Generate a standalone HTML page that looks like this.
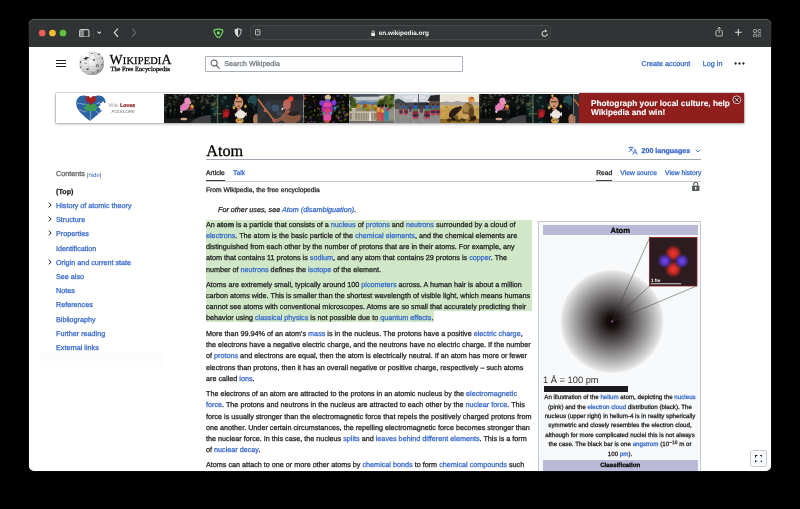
<!DOCTYPE html>
<html>
<head>
<meta charset="utf-8">
<title>Atom - Wikipedia</title>
<style>
html,body{margin:0;padding:0;background:#000;}
body{width:800px;height:509px;overflow:hidden;position:relative;font-family:"Liberation Sans",sans-serif;color:#202122;}
#win{text-rendering:geometricPrecision;will-change:transform;position:absolute;left:29px;top:19px;width:742.3px;height:451.5px;border-radius:5.5px;overflow:hidden;background:#fff;box-shadow:0 0 0 0.6px #161616;}
#tb{position:absolute;left:0;top:0;width:742px;height:27.5px;background:#313434;border-top:1px solid #555858;box-sizing:border-box;}
.abs{position:absolute;}
.dot{position:absolute;top:9.4px;width:6.6px;height:6.6px;border-radius:50%;}
#url{position:absolute;left:222px;top:5.5px;width:298.5px;height:13.7px;border-radius:3.5px;background:#353838;box-shadow:0 0 0 0.7px #4d5050;}
#url span{position:absolute;left:127.8px;top:4.75px;font-size:6.4px;font-weight:bold;color:#f4f4f4;letter-spacing:0;}
#page{-webkit-text-stroke:0.25px;position:absolute;left:0;top:27.5px;width:742px;height:423.5px;background:#fff;}
a,.l{color:#3366cc;text-decoration:none;}
.t{position:absolute;white-space:nowrap;}
.p{position:absolute;left:177px;width:340px;font-size:7.22px;line-height:11.3px;white-space:nowrap;color:#202122;}
.hl{background:#d1e8c8;}
.side{position:absolute;left:27px;font-size:7.2px;white-space:nowrap;color:#3366cc;}
.chev{position:absolute;left:19px;width:4px;height:6px;}
.cap{position:absolute;left:513px;width:156px;text-align:center;font-size:6.2px;line-height:9.4px;white-space:nowrap;color:#202122;}
</style>
</head>
<body>
<div id="win">
  <div id="tb">
    <svg class="abs" style="left:8px;top:8px" width="32" height="10" viewBox="0 0 32 10"><circle cx="5.2" cy="5" r="3.35" fill="#ed5f57"/><circle cx="15.5" cy="5" r="3.350" fill="#f5bd31"/><circle cx="26" cy="5" r="3.350" fill="#5cc43a"/></svg>
    <!-- sidebar icon -->
    <svg class="abs" style="left:50px;top:8.6px" width="10.6" height="8.8" viewBox="0 0 12 10"><rect x="0.7" y="0.7" width="10.6" height="8.6" rx="1.9" fill="none" stroke="#c6c8c8" stroke-width="1.3"/><rect x="0.7" y="0.7" width="4" height="8.6" fill="#c6c8c8" opacity="0.35"/><line x1="4.6" y1="0.7" x2="4.6" y2="9.3" stroke="#c6c8c8" stroke-width="1.1"/><line x1="1.9" y1="2.9" x2="3.3" y2="2.9" stroke="#c6c8c8" stroke-width="0.7"/><line x1="1.9" y1="4.6" x2="3.3" y2="4.600" stroke="#c6c8c8" stroke-width="0.7"/><line x1="1.9" y1="6.3" x2="3.3" y2="6.300" stroke="#c6c8c8" stroke-width="0.7"/></svg>
    <div class="abs" style="left:64.3px;top:8px;width:0.6px;height:10px;background:#404343;"></div>
    <svg class="abs" style="left:67.6px;top:11.4px" width="4.800" height="3.2" viewBox="0 0 6 4"><path d="M1 1 L3 3 L5 1" fill="none" stroke="#dcdede" stroke-width="1.3" stroke-linecap="round" stroke-linejoin="round"/></svg>
    <svg class="abs" style="left:83.6px;top:8.3px" width="6" height="9.400" viewBox="0 0 6 10"><path d="M4.8 1 L1.2 5 L4.8 9" fill="none" stroke="#d4d6d6" stroke-width="1.35" stroke-linecap="round" stroke-linejoin="round"/></svg>
    <svg class="abs" style="left:102.2px;top:8.3px" width="6" height="9.400" viewBox="0 0 6 10"><path d="M1.2 1 L4.8 5 L1.2 9" fill="none" stroke="#646767" stroke-width="1.35" stroke-linecap="round" stroke-linejoin="round"/></svg>
    <!-- shields -->
    <svg class="abs" style="left:184.4px;top:7.5px" width="10.8" height="10.8" viewBox="0 0 11 11"><path d="M1.7 1.9 Q5.5 0.3 9.3 1.9 Q10.3 2.3 10 3.4 Q8.800 7.9 5.5 10.3 Q2.2 7.9 1 3.4 Q0.7 2.3 1.7 1.9 Z" fill="#21402a" stroke="#7fd670" stroke-width="1.15" stroke-linejoin="round"/><rect x="4.2" y="3.500" width="2.6" height="2.8" rx="0.6" fill="#8edb7e"/></svg>
    <svg class="abs" style="left:205.2px;top:8px" width="8.2" height="9.400" viewBox="0 0 9 11"><path d="M4.5 0.7 C3.3 1.500 2 1.8 0.9 1.8 C0.9 5.5 1.600 8.200 4.5 10.2 C7.400 8.200 8.100 5.500 8.100 1.800 C7 1.800 5.700 1.500 4.500 0.700 Z" fill="none" stroke="#dcdede" stroke-width="1.15"/><path d="M4.5 0.7 C3.3 1.500 2 1.800 0.900 1.800 C0.900 5.500 1.600 8.200 4.500 10.200 Z" fill="#dcdede"/></svg>
    <div id="url">
      <svg class="abs" style="left:4.3px;top:3.8px" width="5.4" height="6.6" viewBox="0 0 7 8"><rect x="0.6" y="0.6" width="5.8" height="6.8" rx="1" fill="none" stroke="#d2d4d4" stroke-width="1.15"/><line x1="2.8" y1="2.600" x2="4.500" y2="2.600" stroke="#d2d4d4" stroke-width="0.8"/><line x1="3.6" y1="2.600" x2="3.600" y2="4.200" stroke="#d2d4d4" stroke-width="0.8"/></svg>
      <svg class="abs" style="left:120px;top:4.5px" width="4.4" height="6.4" viewBox="0 0 5 7"><rect x="0.3" y="3" width="4.4" height="3.6" rx="0.6" fill="#e8e8e8"/><path d="M1.2 3 V2 A1.3 1.3 0 0 1 3.8 2 V3" fill="none" stroke="#e8e8e8" stroke-width="0.8"/></svg>
      <span>en.wikipedia.org</span>
      <svg class="abs" style="left:290px;top:3px" width="7.4" height="8.400" viewBox="0 0 7 8"><path d="M6 4.5 A2.500 2.500 0 1 1 4.400 2.150" fill="none" stroke="#d0d2d2" stroke-width="1.05"/><path d="M3.700 0.300 L6 1.900 L3.800 3.400 Z" fill="#d0d2d2"/></svg>
    </div>
    <!-- right icons -->
    <svg class="abs" style="left:686.3px;top:6px" width="8.200" height="11" viewBox="0 0 10 13"><path d="M3.300 5.200 H2.400 A1.300 1.300 0 0 0 1.100 6.500 V10.700 A1.300 1.300 0 0 0 2.400 12 H7.600 A1.300 1.300 0 0 0 8.900 10.700 V6.500 A1.300 1.300 0 0 0 7.600 5.200 H6.700" fill="none" stroke="#d2d4d4" stroke-width="1.05"/><path d="M5 8.600 V1.400 M3.100 3.200 L5 1.300 L6.900 3.200" fill="none" stroke="#d2d4d4" stroke-width="1.05"/></svg>
    <svg class="abs" style="left:704.8px;top:8.300px" width="8.6" height="8.6" viewBox="0 0 9 9"><path d="M4.5 1 V8 M1 4.5 H8" stroke="#d6d8d8" stroke-width="1.1"/></svg>
    <svg class="abs" style="left:723.5px;top:8.5px" width="8.6" height="8.6" viewBox="0 0 10 10"><g fill="none" stroke="#c9cbcb" stroke-width="0.85"><rect x="0.7" y="0.7" width="3.3" height="3.3" rx="0.6"/><rect x="6" y="0.7" width="3.3" height="3.3" rx="0.6"/><rect x="0.7" y="6" width="3.3" height="3.3" rx="0.6"/><rect x="6" y="6" width="3.3" height="3.3" rx="0.6"/></g></svg>
  </div>
  <div id="page">
    <!-- header -->
    <div class="abs" style="left:27.3px;top:13px;width:9.5px;height:1px;background:#202122"></div>
    <div class="abs" style="left:27.3px;top:16.2px;width:9.5px;height:1px;background:#202122"></div>
    <div class="abs" style="left:27.3px;top:19.4px;width:9.5px;height:1px;background:#202122"></div>
    <!-- globe -->
    <svg class="abs" style="left:49.6px;top:4.2px" width="25.4" height="24.6" viewBox="0 0 24.2 24.2" preserveAspectRatio="none">
      <defs><radialGradient id="gl" cx="0.36" cy="0.32" r="0.72"><stop offset="0" stop-color="#ffffff"/><stop offset="0.45" stop-color="#e6e6e6"/><stop offset="0.8" stop-color="#c2c2c2"/><stop offset="1" stop-color="#8c8c8c"/></radialGradient><filter id="gb" x="-10%" y="-10%" width="120%" height="120%"><feGaussianBlur stdDeviation="0.35"/></filter></defs>
      <circle cx="12.1" cy="12.1" r="11.9" fill="url(#gl)"/>
      <path d="M3.200 5.200 L5.200 2.600 L8.600 1.200 L9.600 3 L8 4.600 L9 6 L6.500 7.600 L4.600 6.400 Z" fill="#fff" opacity="0.95"/>
      <g fill="none" stroke="#9a9a9a" stroke-width="0.4" opacity="0.7"><path d="M9.800 1 C11 4 10.500 6.500 9.500 8.500 C8 11 8.500 15 10 18 C10.800 20 11 22 10.600 23.800"/><path d="M15.500 1 C14.500 4 16 6 17 8 C18.500 11 17 14 17.500 17 C18 19.500 17.500 21.500 16.500 23"/><path d="M0.600 9.500 C4 8.500 6 10 9.500 8.500 C12 7.500 14 8.500 17 8 C19.500 7.600 21.500 6.500 23 5.500"/><path d="M0.400 14.500 C3 15.500 6 14.500 8.800 15.200 C12 16 14.500 14.800 17.300 15.400 C20 16 22 15.200 23.800 14.500"/><path d="M3 20 C6 19.500 8 20.500 10.400 20.300 C13 20 15 20.800 17.200 20.400 C19 20 20.500 19.500 21.500 19"/></g>
      <g filter="url(#gb)"><path d="M4.200 7.500 L6 6.600 L6.600 5.400 L7.700 6.200 L9.600 5.900 L8.600 7.300 L7.300 7.500 L7.400 8.900 L6.300 9 L6 7.900 L4.600 8.200 Z" fill="#2c2c2c"/>
      <g fill="#5a5a5a"><rect x="0.900" y="10.200" width="1.300" height="1.800" rx="0.400"/><path d="M5 11.200 L5.600 13 L6.300 11.800 L7 13 L7.600 11.200 L7 11.200 L6.800 12.200 L6.300 11.200 L5.800 12.200 L5.600 11.200 Z"/><rect x="13.300" y="8.100" width="2" height="1.600" rx="0.500"/><path d="M16.200 13.300 h2.600 v2.500 h-0.700 v-1.800 h-1.200 v1.800 h-0.700 Z"/><rect x="7" y="16.900" width="2.200" height="1.700" rx="0.500"/><rect x="17.200" y="18.500" width="1.700" height="1.500" rx="0.500"/><rect x="18.200" y="2.400" width="1.600" height="1.500" rx="0.500"/><rect x="0.900" y="15.300" width="1" height="1.600" rx="0.400"/><rect x="21.800" y="6.300" width="1.100" height="1.800" rx="0.400"/><rect x="11.800" y="1.900" width="1.400" height="1.100" rx="0.400"/><rect x="21.300" y="12.500" width="1.200" height="1.600" rx="0.400"/><rect x="12.300" y="20.800" width="1.600" height="1.200" rx="0.400"/></g></g>
    </svg>
    <div class="t" style="left:80.5px;top:6px;font-family:'Liberation Serif',serif;font-size:10.4px;color:#000;letter-spacing:0.17px;-webkit-text-stroke:0.25px #000;line-height:16px;"><span style="font-size:13.9px">W</span>IKIPEDI<span style="font-size:13.9px">A</span></div>
    <div class="t" style="left:81.5px;top:19.2px;font-family:'Liberation Serif',serif;font-size:6.4px;color:#000;">The Free Encyclopedia</div>
    <!-- search -->
    <div class="abs" style="left:176px;top:9px;width:258px;height:16px;border:0.7px solid #aab0b8;border-radius:1px;box-sizing:border-box;"></div>
    <svg class="abs" style="left:181px;top:12px" width="10.5" height="10.5" viewBox="0 0 9 9"><circle cx="3.5" cy="3.5" r="2.6" fill="none" stroke="#50555a" stroke-width="0.9"/><line x1="5.4" y1="5.4" x2="8.2" y2="8.2" stroke="#50555a" stroke-width="0.9"/></svg>
    <div class="t" style="left:195.3px;top:13.2px;font-size:7.15px;color:#72777d;">Search Wikipedia</div>
    <div class="t l" style="left:612.5px;top:12.2px;font-size:7.2px;">Create account</div>
    <div class="t l" style="left:673.8px;top:12.2px;font-size:7.2px;">Log in</div>
    <svg class="abs" style="left:704.5px;top:15.5px" width="11" height="3" viewBox="0 0 11 3"><circle cx="1.6" cy="1.5" r="1.15" fill="#202122"/><circle cx="5.500" cy="1.500" r="1.150" fill="#202122"/><circle cx="9.400" cy="1.500" r="1.150" fill="#202122"/></svg>
    <!-- banner -->
    <div id="ban" class="abs" style="left:27px;top:46px;width:688px;height:30.5px;background:#fff;box-shadow:0 0 0 0.5px #b8b8b8,0 0.8px 3px rgba(0,0,0,0.45);overflow:hidden;">
      <svg class="abs" style="left:20px;top:2.4px" width="30" height="26.5" viewBox="0 0 30 26.5">
        <path d="M14.5 4.5 C13 1.500 10.5 0.400 7.500 0.400 C3.200 0.400 0.200 3.800 0.200 8.400 C0.200 14.500 6 19.500 14 26 C22 19.500 29.500 14 29.500 7.600 C29.500 3.600 26.800 0.600 23 0.600 C19.500 0.600 16.200 1.800 14.500 4.500 Z" fill="#2a62a2"/>
        <path d="M24.200 8.100 L25.900 8.100 C25.500 7 26.200 6.400 27 6.400 C27.800 6.400 28.500 7 28.100 8.100 L30 8.100 L30 15.600 L27.600 15.600 C27.200 15 26.400 14.700 25.800 15.100 C25.400 15.400 25 15.600 24.200 15.600 L24.200 13 C23.200 13.400 22.600 12.800 22.600 12 C22.600 11.200 23.200 10.600 24.200 11 Z" fill="#fff"/>
        <path d="M9.600 8.900 L20 8.900 L20 11.500 C21 11.100 21.700 11.700 21.700 12.500 C21.700 13.300 21 13.900 20 13.500 L20 16 L9.600 16 L9.600 13.700 C8.600 14.100 7.600 13.500 7.600 12.700 C7.600 11.900 8.600 11.400 9.600 11.800 Z" fill="#3d9a55"/>
        <path d="M9.400 1.700 L12.600 0.900 L14.700 3 L16.800 0.900 L20 1.700 L19.600 3.600 C20.700 3.900 20.700 5.400 19.400 5.600 L19.200 7.300 L16.400 7.300 C17 8.700 16.200 9.700 15 9.700 C13.800 9.700 13 8.700 13.600 7.300 L10.400 7.300 L10.200 5.600 C8.900 5.400 8.900 3.900 10 3.600 Z" fill="#a3211f"/>
        <g fill="none" stroke="#dbe7f4" stroke-width="0.55"><path d="M0.400 8 C2 7 2.500 9.600 4 8.600 C5.200 7.800 5.600 9.700 7.600 9.200 L9.400 9.100"/><path d="M3.400 14.600 C5 14 5 16.600 6.500 16 C7.600 15.600 7.800 17.400 8.800 17.200 L9.600 16"/><path d="M14.600 16 C13.400 18 15.800 19.500 14.400 21.500 C13.600 23 14.800 24.500 14.200 25.800"/><path d="M20 16 C20.600 17.400 22 17 22.400 18.600 L24 19"/><path d="M20.300 8.800 L22.500 8.400 C22.300 7.200 23.500 7 24.200 8"/></g>
      </svg>
      <div class="t" style="left:52.5px;top:10.7px;font-size:5.3px;color:#9a9a9a;-webkit-text-stroke:0;">Wiki <b style="color:#8c1a1a;-webkit-text-stroke:0.2px #8c1a1a;">Loves</b></div>
      <div class="t" style="left:55.5px;top:16.8px;font-size:4.4px;font-style:italic;color:#666;letter-spacing:0;-webkit-text-stroke:0;">FOLKLORE</div>
      <svg class="abs" style="left:107.6px;top:1.1px" width="416" height="29.3" viewBox="0 0 416 29.3"><defs><filter id="b1" x="-10%" y="-10%" width="120%" height="120%"><feGaussianBlur stdDeviation="0.45"/></filter><g id="ph1"><clipPath id="c1"><rect x="0" y="0" width="47" height="29.3"/></clipPath><g clip-path="url(#c1)"><rect x="0" y="0" width="47" height="29.3" fill="#0f110f" /><g filter="url(#b1)"><ellipse cx="2.3" cy="16.4" rx="1.6" ry="1.0" fill="#465042" opacity="0.64"/><ellipse cx="1.8" cy="8.7" rx="0.6" ry="1.1" fill="#3b4438" opacity="0.63"/><ellipse cx="26.6" cy="18.9" rx="1.2" ry="0.6" fill="#343c31" opacity="0.85"/><ellipse cx="18.6" cy="19.5" rx="1.6" ry="1.2" fill="#3b4438" opacity="0.62"/><ellipse cx="25.4" cy="11.4" rx="0.7" ry="1.0" fill="#4a4a3a" opacity="0.82"/><ellipse cx="30.0" cy="7.4" rx="0.7" ry="1.2" fill="#566050" opacity="0.82"/><ellipse cx="23.3" cy="10.6" rx="1.2" ry="1.2" fill="#343c31" opacity="0.91"/><ellipse cx="14.1" cy="15.9" rx="1.2" ry="1.0" fill="#2c3336" opacity="0.88"/><ellipse cx="23.3" cy="6.9" rx="0.6" ry="0.9" fill="#232a23" opacity="0.78"/><ellipse cx="19.7" cy="15.1" rx="1.7" ry="0.6" fill="#3b4438" opacity="0.66"/><ellipse cx="3.6" cy="11.2" rx="1.0" ry="1.7" fill="#2c3336" opacity="0.92"/><ellipse cx="27.9" cy="11.6" rx="0.9" ry="1.3" fill="#4a4a3a" opacity="0.78"/><ellipse cx="32.8" cy="1.3" rx="0.6" ry="0.8" fill="#4a4a3a" opacity="0.89"/><ellipse cx="38.6" cy="5.7" rx="1.3" ry="1.7" fill="#465042" opacity="0.75"/><ellipse cx="16.7" cy="12.2" rx="0.9" ry="1.6" fill="#566050" opacity="0.80"/><ellipse cx="11.6" cy="7.8" rx="1.4" ry="0.7" fill="#232a23" opacity="0.95"/><ellipse cx="13.1" cy="2.7" rx="0.7" ry="1.0" fill="#343c31" opacity="0.77"/><ellipse cx="16.9" cy="17.7" rx="0.8" ry="1.0" fill="#3b4438" opacity="0.98"/><ellipse cx="31.0" cy="0.2" rx="0.6" ry="0.7" fill="#232a23" opacity="0.93"/><ellipse cx="19.7" cy="7.4" rx="0.8" ry="0.5" fill="#232a23" opacity="0.83"/><ellipse cx="29.0" cy="13.5" rx="1.3" ry="1.1" fill="#232a23" opacity="0.62"/><ellipse cx="37.5" cy="7.8" rx="1.4" ry="1.5" fill="#4a4a3a" opacity="0.76"/><ellipse cx="9.0" cy="19.7" rx="1.1" ry="1.0" fill="#343c31" opacity="0.78"/><ellipse cx="0.0" cy="3.0" rx="0.9" ry="0.6" fill="#343c31" opacity="0.64"/><ellipse cx="9.8" cy="7.5" rx="1.2" ry="0.6" fill="#465042" opacity="0.85"/><ellipse cx="5.4" cy="9.8" rx="1.2" ry="1.1" fill="#465042" opacity="0.99"/><ellipse cx="4.8" cy="6.9" rx="1.1" ry="0.6" fill="#2c3336" opacity="0.71"/><ellipse cx="9.6" cy="19.0" rx="1.3" ry="1.1" fill="#4a4a3a" opacity="0.74"/><ellipse cx="24.8" cy="19.6" rx="1.2" ry="0.5" fill="#566050" opacity="0.95"/><ellipse cx="42.7" cy="7.1" rx="1.5" ry="1.1" fill="#566050" opacity="0.69"/><ellipse cx="10.5" cy="16.2" rx="1.4" ry="0.9" fill="#3b4438" opacity="0.99"/><ellipse cx="18.8" cy="16.1" rx="0.7" ry="0.8" fill="#4a4a3a" opacity="0.68"/><ellipse cx="1.3" cy="5.6" rx="0.9" ry="0.5" fill="#2c3336" opacity="0.70"/><ellipse cx="38.0" cy="14.5" rx="1.2" ry="0.9" fill="#566050" opacity="0.74"/><ellipse cx="22.1" cy="6.8" rx="0.6" ry="0.6" fill="#465042" opacity="0.79"/><ellipse cx="30.7" cy="16.0" rx="1.5" ry="1.1" fill="#3b4438" opacity="0.63"/><ellipse cx="33.4" cy="4.0" rx="0.6" ry="1.0" fill="#566050" opacity="0.96"/><ellipse cx="37.6" cy="19.4" rx="1.4" ry="0.9" fill="#2c3336" opacity="0.76"/><ellipse cx="7.5" cy="19.9" rx="1.4" ry="0.6" fill="#2c3336" opacity="0.61"/><ellipse cx="6.9" cy="16.5" rx="1.6" ry="1.5" fill="#3b4438" opacity="0.99"/><ellipse cx="25.8" cy="0.4" rx="1.6" ry="0.7" fill="#566050" opacity="0.92"/><ellipse cx="43.9" cy="8.7" rx="1.3" ry="1.1" fill="#566050" opacity="0.95"/><ellipse cx="10.0" cy="10.0" rx="1.5" ry="0.5" fill="#4a4a3a" opacity="0.91"/><ellipse cx="6.2" cy="18.2" rx="0.8" ry="1.0" fill="#465042" opacity="0.74"/><ellipse cx="24.3" cy="16.5" rx="1.3" ry="1.5" fill="#2c3336" opacity="0.95"/><ellipse cx="0.9" cy="8.8" rx="1.1" ry="1.1" fill="#232a23" opacity="0.67"/><ellipse cx="6.7" cy="12.4" rx="1.4" ry="0.7" fill="#343c31" opacity="0.65"/><ellipse cx="26.1" cy="15.7" rx="0.9" ry="1.1" fill="#343c31" opacity="0.64"/><ellipse cx="2.0" cy="2.0" rx="0.6" ry="0.7" fill="#3b4438" opacity="0.78"/><ellipse cx="20.8" cy="12.3" rx="1.4" ry="1.6" fill="#343c31" opacity="0.80"/><ellipse cx="23.9" cy="16.1" rx="0.7" ry="0.8" fill="#3b4438" opacity="0.80"/><ellipse cx="44.3" cy="5.2" rx="1.3" ry="1.6" fill="#232a23" opacity="0.82"/><ellipse cx="5.7" cy="8.8" rx="1.5" ry="0.7" fill="#232a23" opacity="0.63"/><ellipse cx="14.2" cy="2.4" rx="1.0" ry="0.8" fill="#232a23" opacity="0.91"/><ellipse cx="11.9" cy="2.7" rx="1.3" ry="0.9" fill="#566050" opacity="0.79"/><ellipse cx="22.9" cy="19.8" rx="1.6" ry="1.0" fill="#566050" opacity="0.93"/><ellipse cx="19.0" cy="8.4" rx="1.3" ry="1.7" fill="#232a23" opacity="0.74"/><ellipse cx="26.0" cy="8.8" rx="1.4" ry="0.5" fill="#343c31" opacity="0.61"/><ellipse cx="45.2" cy="2.3" rx="1.1" ry="0.9" fill="#465042" opacity="0.97"/><ellipse cx="12.5" cy="0.8" rx="1.7" ry="0.6" fill="#232a23" opacity="0.91"/><ellipse cx="39.9" cy="13.5" rx="1.4" ry="1.5" fill="#465042" opacity="0.98"/><ellipse cx="26.8" cy="14.0" rx="0.7" ry="1.6" fill="#2c3336" opacity="0.64"/><ellipse cx="42.1" cy="5.4" rx="1.5" ry="0.7" fill="#343c31" opacity="0.61"/><ellipse cx="40.2" cy="1.3" rx="1.5" ry="0.6" fill="#343c31" opacity="0.95"/><ellipse cx="19.6" cy="18.3" rx="0.5" ry="1.7" fill="#2c3336" opacity="0.85"/><ellipse cx="5.1" cy="3.2" rx="1.1" ry="0.8" fill="#343c31" opacity="0.62"/><ellipse cx="25.0" cy="4.1" rx="1.6" ry="1.3" fill="#232a23" opacity="0.78"/><ellipse cx="0.9" cy="5.0" rx="0.7" ry="0.9" fill="#566050" opacity="0.61"/><ellipse cx="24.2" cy="4.9" rx="1.1" ry="1.7" fill="#566050" opacity="0.78"/><ellipse cx="23.3" cy="16.7" rx="1.5" ry="1.0" fill="#566050" opacity="0.76"/><ellipse cx="10.8" cy="4.0" rx="0.9" ry="0.8" fill="#3b4438" opacity="0.95"/><ellipse cx="16.3" cy="1.1" rx="1.3" ry="1.0" fill="#566050" opacity="0.65"/><ellipse cx="20.2" cy="1.1" rx="1.3" ry="1.6" fill="#343c31" opacity="0.87"/><ellipse cx="13.3" cy="4.8" rx="1.5" ry="1.3" fill="#2c3336" opacity="0.72"/><ellipse cx="0.2" cy="7.3" rx="0.7" ry="0.8" fill="#2c3336" opacity="0.73"/><ellipse cx="41.5" cy="4.4" rx="0.9" ry="0.5" fill="#3b4438" opacity="0.67"/><ellipse cx="23.6" cy="4.0" rx="1.0" ry="1.1" fill="#465042" opacity="0.80"/><ellipse cx="6.8" cy="11.7" rx="0.6" ry="1.5" fill="#343c31" opacity="0.76"/><ellipse cx="27.5" cy="10.6" rx="0.9" ry="0.8" fill="#465042" opacity="0.90"/><ellipse cx="28.0" cy="15.3" rx="1.6" ry="1.4" fill="#566050" opacity="0.89"/><ellipse cx="30.2" cy="0.9" rx="0.7" ry="1.4" fill="#2c3336" opacity="0.93"/><ellipse cx="38.2" cy="2.8" rx="1.3" ry="1.4" fill="#3b4438" opacity="0.81"/><ellipse cx="0.8" cy="13.7" rx="1.2" ry="1.5" fill="#3b4438" opacity="0.92"/><ellipse cx="10.8" cy="0.6" rx="1.3" ry="1.3" fill="#566050" opacity="0.65"/><ellipse cx="21.2" cy="1.0" rx="1.7" ry="1.0" fill="#465042" opacity="0.61"/><ellipse cx="0.2" cy="16.0" rx="1.3" ry="1.1" fill="#3b4438" opacity="0.90"/><ellipse cx="24.7" cy="14.9" rx="1.6" ry="0.6" fill="#3b4438" opacity="0.79"/><ellipse cx="34.3" cy="4.1" rx="0.6" ry="0.8" fill="#4a4a3a" opacity="0.90"/><ellipse cx="22.5" cy="13.7" rx="1.1" ry="1.0" fill="#2c3336" opacity="0.91"/><ellipse cx="28.2" cy="6.6" rx="1.3" ry="0.7" fill="#3b4438" opacity="0.86"/><ellipse cx="0.6" cy="1.2" rx="0.9" ry="1.2" fill="#566050" opacity="0.71"/><ellipse cx="23.0" cy="14.2" rx="0.6" ry="0.8" fill="#566050" opacity="0.71"/><ellipse cx="42.0" cy="4.0" rx="1.1" ry="0.6" fill="#2c3336" opacity="0.99"/><ellipse cx="38.5" cy="19.4" rx="0.5" ry="1.1" fill="#2c3336" opacity="0.78"/><ellipse cx="43.7" cy="1.5" rx="1.0" ry="1.6" fill="#465042" opacity="0.64"/><ellipse cx="6.2" cy="16.4" rx="1.1" ry="1.6" fill="#566050" opacity="0.80"/><ellipse cx="42.2" cy="9.7" rx="1.3" ry="0.8" fill="#343c31" opacity="0.61"/><ellipse cx="19.1" cy="14.5" rx="1.6" ry="1.3" fill="#343c31" opacity="0.77"/><ellipse cx="0.1" cy="15.0" rx="0.9" ry="1.5" fill="#2c3336" opacity="0.94"/><ellipse cx="0.6" cy="14.8" rx="1.6" ry="0.7" fill="#343c31" opacity="0.70"/><ellipse cx="27.7" cy="7.2" rx="1.0" ry="1.7" fill="#343c31" opacity="0.77"/><ellipse cx="2.4" cy="13.2" rx="1.5" ry="0.8" fill="#465042" opacity="0.85"/><ellipse cx="24.0" cy="3.8" rx="0.8" ry="0.8" fill="#232a23" opacity="0.75"/><ellipse cx="29.7" cy="18.3" rx="1.6" ry="1.5" fill="#2c3336" opacity="0.98"/><ellipse cx="43.9" cy="8.2" rx="0.7" ry="0.6" fill="#3b4438" opacity="0.85"/><ellipse cx="2.3" cy="18.5" rx="1.3" ry="0.8" fill="#232a23" opacity="0.65"/><ellipse cx="12.0" cy="14.8" rx="1.0" ry="0.8" fill="#2c3336" opacity="0.86"/><ellipse cx="26.2" cy="7.9" rx="1.3" ry="0.9" fill="#2c3336" opacity="0.67"/><ellipse cx="38.2" cy="11.0" rx="0.6" ry="1.1" fill="#232a23" opacity="0.78"/><ellipse cx="6.6" cy="3.8" rx="1.7" ry="1.0" fill="#465042" opacity="0.64"/><rect x="3" y="12.683910467563184" width="2.6" height="12" fill="#070808" opacity="0.9"/><rect x="7.5" y="12.182188679565307" width="2.6" height="12" fill="#070808" opacity="0.9"/><rect x="12" y="12.478253161434909" width="2.6" height="12" fill="#070808" opacity="0.9"/><rect x="16" y="12.51671513630984" width="2.6" height="12" fill="#070808" opacity="0.9"/><rect x="31" y="13.139235484631984" width="2.6" height="12" fill="#070808" opacity="0.9"/><rect x="35" y="13.77450291842344" width="2.6" height="12" fill="#070808" opacity="0.9"/><rect x="39.5" y="13.499315215209357" width="2.6" height="12" fill="#070808" opacity="0.9"/><rect x="43.5" y="12.825563317281572" width="2.6" height="12" fill="#070808" opacity="0.9"/><rect x="0" y="24.5" width="47" height="5" fill="#1a1b1d" /><path d="M26 29.3 C30 24 38 21.500 47 21 L47 29.3 Z" fill="#3f4144"/><ellipse cx="21.9" cy="19.8" rx="5" ry="3.4" fill="#0b0b0d" /><ellipse cx="20.8" cy="12.6" rx="5.4" ry="3.6" fill="#e27ab4" transform="rotate(-35 20.8 12.6)"/><ellipse cx="23.3" cy="6.8" rx="3" ry="3.1" fill="#ee8fc4" /><ellipse cx="25.9" cy="8.6" rx="1.3" ry="1.6" fill="#d9a58a" /><ellipse cx="28" cy="12.7" rx="1.8" ry="2" fill="#dca02e" /><ellipse cx="27.2" cy="14.6" rx="1.3" ry="1.3" fill="#c92f28" /><ellipse cx="19.8" cy="25" rx="3.4" ry="1.3" fill="#cfa590" /><ellipse cx="17.3" cy="17.5" rx="1.2" ry="1.6" fill="#d8c6d8" /></g></g></g><g id="ph2"><clipPath id="c2"><rect x="0" y="0" width="47.4" height="29.3"/></clipPath><g clip-path="url(#c2)"><rect x="0" y="0" width="47.4" height="29.3" fill="#0e191a" /><g filter="url(#b1)"><ellipse cx="12.8" cy="22.0" rx="1.8" ry="0.9" fill="#0a0f10" opacity="0.80"/><ellipse cx="23.9" cy="18.4" rx="2.1" ry="0.8" fill="#3a625a" opacity="0.95"/><ellipse cx="18.2" cy="18.9" rx="0.7" ry="2.0" fill="#183033" opacity="0.77"/><ellipse cx="1.0" cy="0.9" rx="2.0" ry="2.0" fill="#2f5552" opacity="0.88"/><ellipse cx="0.0" cy="11.5" rx="1.4" ry="1.5" fill="#24424e" opacity="0.97"/><ellipse cx="21.3" cy="22.9" rx="1.4" ry="1.3" fill="#24424e" opacity="0.69"/><ellipse cx="44.6" cy="21.1" rx="1.4" ry="1.7" fill="#183033" opacity="0.86"/><ellipse cx="36.8" cy="0.0" rx="2.0" ry="0.7" fill="#24424e" opacity="0.65"/><ellipse cx="14.4" cy="3.7" rx="2.1" ry="1.6" fill="#3a625a" opacity="0.70"/><ellipse cx="4.7" cy="8.8" rx="1.3" ry="1.8" fill="#4f5536" opacity="0.98"/><ellipse cx="28.5" cy="0.3" rx="1.2" ry="1.0" fill="#183033" opacity="0.72"/><ellipse cx="39.8" cy="7.1" rx="1.0" ry="1.1" fill="#0a0f10" opacity="0.81"/><ellipse cx="33.4" cy="9.0" rx="1.0" ry="2.1" fill="#3a625a" opacity="0.61"/><ellipse cx="3.8" cy="6.7" rx="2.0" ry="1.6" fill="#0a0f10" opacity="0.77"/><ellipse cx="16.0" cy="12.3" rx="1.0" ry="0.7" fill="#2f5552" opacity="0.87"/><ellipse cx="40.1" cy="2.0" rx="0.6" ry="1.1" fill="#183033" opacity="0.80"/><ellipse cx="10.9" cy="6.5" rx="1.1" ry="1.9" fill="#183033" opacity="0.90"/><ellipse cx="28.9" cy="26.3" rx="0.8" ry="1.6" fill="#2f5552" opacity="0.79"/><ellipse cx="43.7" cy="1.6" rx="0.7" ry="1.6" fill="#4f5536" opacity="0.61"/><ellipse cx="2.9" cy="11.5" rx="0.8" ry="0.7" fill="#3a625a" opacity="0.96"/><ellipse cx="44.2" cy="9.6" rx="1.8" ry="2.2" fill="#2f5552" opacity="0.67"/><ellipse cx="31.5" cy="11.1" rx="1.8" ry="0.7" fill="#3a625a" opacity="0.75"/><ellipse cx="3.7" cy="2.4" rx="1.3" ry="0.8" fill="#2f5552" opacity="0.77"/><ellipse cx="18.0" cy="22.5" rx="1.5" ry="1.8" fill="#234346" opacity="0.72"/><ellipse cx="22.4" cy="10.9" rx="1.3" ry="0.7" fill="#24424e" opacity="0.97"/><ellipse cx="22.5" cy="18.5" rx="1.1" ry="1.8" fill="#183033" opacity="0.70"/><ellipse cx="1.7" cy="1.8" rx="1.8" ry="0.7" fill="#4f5536" opacity="0.97"/><ellipse cx="28.7" cy="10.6" rx="0.9" ry="0.7" fill="#2f5552" opacity="0.73"/><ellipse cx="32.7" cy="27.1" rx="0.7" ry="1.8" fill="#3a625a" opacity="0.72"/><ellipse cx="30.1" cy="27.6" rx="1.8" ry="2.1" fill="#4f5536" opacity="0.61"/><ellipse cx="22.1" cy="22.7" rx="0.8" ry="1.7" fill="#183033" opacity="0.92"/><ellipse cx="23.5" cy="0.3" rx="1.9" ry="0.8" fill="#0a0f10" opacity="0.97"/><ellipse cx="28.8" cy="9.6" rx="1.9" ry="1.8" fill="#2f5552" opacity="0.73"/><ellipse cx="24.3" cy="11.5" rx="1.9" ry="1.6" fill="#2f5552" opacity="0.66"/><ellipse cx="26.2" cy="9.5" rx="0.7" ry="0.7" fill="#0a0f10" opacity="0.99"/><ellipse cx="4.0" cy="2.8" rx="2.2" ry="1.0" fill="#234346" opacity="0.80"/><ellipse cx="6.3" cy="13.5" rx="2.2" ry="0.9" fill="#4f5536" opacity="0.96"/><ellipse cx="31.5" cy="3.6" rx="1.8" ry="2.0" fill="#183033" opacity="0.94"/><ellipse cx="12.0" cy="7.6" rx="1.0" ry="1.0" fill="#2f5552" opacity="0.78"/><ellipse cx="41.9" cy="16.9" rx="1.0" ry="0.8" fill="#183033" opacity="0.73"/><ellipse cx="24.9" cy="19.0" rx="1.0" ry="1.0" fill="#0a0f10" opacity="0.64"/><ellipse cx="22.5" cy="24.0" rx="2.2" ry="0.8" fill="#0a0f10" opacity="0.94"/><ellipse cx="5.7" cy="5.6" rx="0.7" ry="1.1" fill="#2f5552" opacity="0.99"/><ellipse cx="24.3" cy="5.2" rx="0.9" ry="0.7" fill="#3a625a" opacity="0.84"/><ellipse cx="5.0" cy="17.5" rx="1.8" ry="2.1" fill="#24424e" opacity="0.85"/><ellipse cx="2.1" cy="29.3" rx="0.7" ry="1.1" fill="#183033" opacity="0.62"/><ellipse cx="0.5" cy="9.6" rx="1.6" ry="0.9" fill="#4f5536" opacity="0.87"/><ellipse cx="1.5" cy="14.5" rx="1.6" ry="0.7" fill="#183033" opacity="0.79"/><ellipse cx="26.1" cy="18.7" rx="0.8" ry="1.2" fill="#0a0f10" opacity="0.64"/><ellipse cx="46.8" cy="19.6" rx="1.2" ry="1.0" fill="#183033" opacity="0.77"/><ellipse cx="16.9" cy="12.2" rx="1.1" ry="1.5" fill="#234346" opacity="0.95"/><ellipse cx="34.5" cy="6.0" rx="1.2" ry="0.9" fill="#24424e" opacity="0.60"/><ellipse cx="19.3" cy="25.9" rx="1.3" ry="1.9" fill="#183033" opacity="0.78"/><ellipse cx="6.8" cy="23.6" rx="0.8" ry="0.7" fill="#183033" opacity="0.76"/><ellipse cx="23.9" cy="4.3" rx="1.6" ry="1.2" fill="#3a625a" opacity="0.71"/><ellipse cx="18.2" cy="22.1" rx="0.9" ry="0.7" fill="#3a625a" opacity="0.92"/><ellipse cx="44.7" cy="28.6" rx="0.9" ry="0.8" fill="#24424e" opacity="0.79"/><ellipse cx="4.1" cy="20.9" rx="1.6" ry="1.6" fill="#234346" opacity="0.88"/><ellipse cx="29.4" cy="18.0" rx="1.6" ry="2.0" fill="#183033" opacity="0.68"/><ellipse cx="18.9" cy="15.2" rx="0.9" ry="0.9" fill="#0a0f10" opacity="0.75"/><ellipse cx="38.7" cy="5.6" rx="0.8" ry="2.2" fill="#234346" opacity="0.95"/><ellipse cx="39.7" cy="3.4" rx="1.8" ry="0.7" fill="#24424e" opacity="0.84"/><ellipse cx="30.8" cy="9.0" rx="2.0" ry="1.8" fill="#3a625a" opacity="0.70"/><ellipse cx="20.8" cy="0.7" rx="1.7" ry="1.3" fill="#0a0f10" opacity="0.85"/><ellipse cx="29.3" cy="24.0" rx="1.3" ry="1.3" fill="#0a0f10" opacity="0.93"/><ellipse cx="6.1" cy="12.6" rx="1.4" ry="0.8" fill="#24424e" opacity="0.64"/><ellipse cx="1.9" cy="3.8" rx="1.4" ry="1.7" fill="#0a0f10" opacity="0.97"/><ellipse cx="2.6" cy="14.8" rx="1.8" ry="1.4" fill="#2f5552" opacity="0.75"/><ellipse cx="47.2" cy="21.5" rx="0.8" ry="2.0" fill="#24424e" opacity="0.93"/><ellipse cx="13.6" cy="23.8" rx="0.8" ry="2.0" fill="#183033" opacity="0.92"/><ellipse cx="3.1" cy="10.3" rx="1.9" ry="2.1" fill="#4f5536" opacity="0.90"/><ellipse cx="42.9" cy="13.4" rx="1.1" ry="1.6" fill="#183033" opacity="0.70"/><ellipse cx="24.0" cy="9.3" rx="0.9" ry="1.0" fill="#0a0f10" opacity="0.61"/><ellipse cx="13.2" cy="9.6" rx="1.2" ry="1.6" fill="#183033" opacity="0.75"/><ellipse cx="25.2" cy="18.6" rx="1.9" ry="0.8" fill="#24424e" opacity="0.74"/><ellipse cx="32.6" cy="26.3" rx="1.3" ry="1.4" fill="#24424e" opacity="0.70"/><ellipse cx="37.8" cy="7.8" rx="1.6" ry="1.2" fill="#3a625a" opacity="1.00"/><ellipse cx="3.9" cy="6.7" rx="0.8" ry="1.1" fill="#3a625a" opacity="0.85"/><ellipse cx="14.7" cy="28.3" rx="1.1" ry="1.4" fill="#234346" opacity="0.95"/><ellipse cx="35.4" cy="6.5" rx="2.0" ry="1.8" fill="#4f5536" opacity="0.72"/><rect x="6.2" y="0" width="1.5" height="29.3" fill="#5d6d4c" opacity="0.85"/><rect x="2.5" y="19" width="9" height="1.3" fill="#5a643f" opacity="0.8"/><ellipse cx="42.5" cy="5.5" rx="4" ry="4" fill="#2a5560" opacity="0.8"/><ellipse cx="31" cy="22" rx="14" ry="11" fill="#0a090b" /><ellipse cx="28.6" cy="5.4" rx="7.6" ry="5.2" fill="#0c0a0b" /><ellipse cx="35" cy="10" rx="2.5" ry="6" fill="#0c0a0b" /><ellipse cx="28.1" cy="8.6" rx="4.6" ry="5.8" fill="#c9946f" /><ellipse cx="26.4" cy="1.6" rx="1.1" ry="1.6" fill="#d8a838" /><ellipse cx="26.6" cy="4.5" rx="0.8" ry="0.9" fill="#c8282a" /><rect x="25" y="7.2" width="6.4" height="1.1" fill="#4a261e" opacity="0.85"/><ellipse cx="28.2" cy="12.2" rx="1.2" ry="0.7" fill="#b02028" /><ellipse cx="23.3" cy="13.6" rx="1.4" ry="1.9" fill="#c9a040" /><ellipse cx="34.8" cy="12.4" rx="1.3" ry="1.8" fill="#c9a040" /><ellipse cx="28.4" cy="15.5" rx="2" ry="1.6" fill="#b98360" /><ellipse cx="30" cy="20.5" rx="4.8" ry="4.2" fill="#ebe7df" /><path d="M24 19 L27 20.5 L24.5 23 Z M36 18 L33 20 L36 22.5 Z M30 14.5 L28.5 17 L31.500 17 Z" fill="#e4dfd6"/><ellipse cx="29" cy="26.6" rx="4" ry="2.8" fill="#c8a040" /><ellipse cx="27.6" cy="26.3" rx="0.9" ry="0.9" fill="#c8282a" /><ellipse cx="30.6" cy="25.8" rx="0.9" ry="0.9" fill="#3a62c0" /><ellipse cx="15.6" cy="20.6" rx="2.5" ry="3" fill="#b81c24" /><rect x="12.6" y="15.639999999999999" width="1.1" height="5.5" fill="#b81c24" rx="0.5"/><rect x="14.3" y="14.62" width="1.1" height="5.5" fill="#b81c24" rx="0.5"/><rect x="16" y="14.799999999999999" width="1.1" height="5.5" fill="#b81c24" rx="0.5"/><rect x="17.6" y="15.76" width="1.1" height="5.5" fill="#b81c24" rx="0.5"/><ellipse cx="13" cy="22.5" rx="1" ry="1.6" fill="#a01820" /><ellipse cx="45.4" cy="25.5" rx="3" ry="5.5" fill="#b07a5a" /></g></g></g></defs><use href="#ph1" x="0" y="0"/><use href="#ph2" x="46.6" y="0"/><g transform="translate(93.3,0)"><g><clipPath id="c3"><rect x="0" y="0" width="46.3" height="29.3"/></clipPath><g clip-path="url(#c3)"><rect x="0" y="0" width="46.3" height="29.3" fill="#303236" /><g filter="url(#b1)"><rect x="0" y="0" width="46.3" height="6" fill="#25272a" opacity="0.9"/><ellipse cx="41.5" cy="3.9" rx="2.6" ry="2.8" fill="#26282c" opacity="0.60"/><ellipse cx="26.3" cy="8.9" rx="1.6" ry="1.6" fill="#26282c" opacity="0.74"/><ellipse cx="27.3" cy="6.0" rx="2.1" ry="3.0" fill="#26282c" opacity="0.78"/><ellipse cx="37.1" cy="20.7" rx="1.9" ry="1.5" fill="#3a3d42" opacity="0.70"/><ellipse cx="36.2" cy="11.8" rx="3.1" ry="3.7" fill="#2a2c30" opacity="0.62"/><ellipse cx="41.3" cy="17.4" rx="1.6" ry="3.6" fill="#2a2c30" opacity="0.76"/><ellipse cx="11.5" cy="26.5" rx="3.8" ry="3.3" fill="#26282c" opacity="0.52"/><ellipse cx="7.4" cy="26.7" rx="1.6" ry="2.0" fill="#26282c" opacity="0.55"/><ellipse cx="6.6" cy="5.8" rx="2.9" ry="3.9" fill="#26282c" opacity="0.77"/><ellipse cx="28.4" cy="14.9" rx="3.1" ry="2.5" fill="#26282c" opacity="0.53"/><ellipse cx="36.3" cy="21.0" rx="1.6" ry="3.7" fill="#26282c" opacity="0.50"/><ellipse cx="34.3" cy="13.3" rx="3.4" ry="2.7" fill="#3a3d42" opacity="0.60"/><ellipse cx="5.7" cy="26.1" rx="2.2" ry="3.1" fill="#2a2c30" opacity="0.92"/><ellipse cx="25.6" cy="12.8" rx="3.3" ry="2.2" fill="#3a3d42" opacity="0.85"/><ellipse cx="43.0" cy="26.2" rx="3.9" ry="2.2" fill="#26282c" opacity="0.54"/><ellipse cx="10.9" cy="21.8" rx="1.5" ry="2.2" fill="#26282c" opacity="0.93"/><ellipse cx="18" cy="14" rx="3.8" ry="3.6" fill="#3d5670" opacity="0.9"/><ellipse cx="11" cy="12" rx="3" ry="4" fill="#34465a" opacity="0.8"/><ellipse cx="22" cy="19" rx="3" ry="3" fill="#3a4a5c" opacity="0.7"/><line x1="0.4" y1="5" x2="17" y2="26.8" stroke="#c8703a" stroke-width="1.5"/><ellipse cx="8" cy="16.6" rx="1.8" ry="1.5" fill="#b06a58" /><ellipse cx="17.5" cy="26.4" rx="2.6" ry="2" fill="#a85a4a" /><ellipse cx="33.5" cy="23.2" rx="10" ry="6.4" fill="#84563f" /><ellipse cx="36" cy="19.5" rx="6" ry="2.5" fill="#2a2224" /><path d="M18 26 L28 20 L30 23 L20 28.500 Z" fill="#8a5a46"/><ellipse cx="34.6" cy="10.4" rx="3.2" ry="5.2" fill="#4a2c2c" /><ellipse cx="29.6" cy="10.6" rx="4" ry="5" fill="#b7685c" /><ellipse cx="33.6" cy="4.8" rx="2.6" ry="2.5" fill="#e2412c" /><ellipse cx="31" cy="6.8" rx="3" ry="1.6" fill="#c85a50" /><ellipse cx="25.6" cy="15" rx="1.5" ry="1.3" fill="#e6ddd6" /><ellipse cx="26.4" cy="15.3" rx="0.8" ry="0.7" fill="#301818" /><ellipse cx="30" cy="17.5" rx="2.4" ry="2.4" fill="#9a5a4c" /></g></g></g></g><g transform="translate(139.5,0)"><g><clipPath id="c4"><rect x="0" y="0" width="45.7" height="29.3"/></clipPath><g clip-path="url(#c4)"><rect x="0" y="0" width="45.7" height="29.3" fill="#0b0b07" /><g filter="url(#b1)"><ellipse cx="27.5" cy="11.1" rx="0.7" ry="0.9" fill="#a85a20" opacity="0.89"/><ellipse cx="21.6" cy="15.5" rx="1.4" ry="1.1" fill="#203060" opacity="0.55"/><ellipse cx="26.1" cy="9.0" rx="1.0" ry="1.3" fill="#35521e" opacity="0.63"/><ellipse cx="7.8" cy="1.0" rx="1.1" ry="1.1" fill="#4a2a6a" opacity="0.59"/><ellipse cx="6.5" cy="0.8" rx="1.5" ry="0.9" fill="#4a2a6a" opacity="0.57"/><ellipse cx="33.7" cy="1.9" rx="1.2" ry="1.3" fill="#203060" opacity="0.79"/><ellipse cx="24.4" cy="19.5" rx="0.7" ry="1.6" fill="#a85a20" opacity="0.90"/><ellipse cx="5.1" cy="1.0" rx="0.6" ry="0.7" fill="#3a6a30" opacity="0.89"/><ellipse cx="28.9" cy="14.0" rx="0.6" ry="1.3" fill="#203060" opacity="0.60"/><ellipse cx="19.4" cy="0.6" rx="0.7" ry="0.9" fill="#203060" opacity="0.65"/><ellipse cx="41.6" cy="22.5" rx="0.6" ry="1.3" fill="#b8368a" opacity="0.79"/><ellipse cx="1.4" cy="12.1" rx="1.4" ry="1.2" fill="#8a8a30" opacity="0.72"/><ellipse cx="24.6" cy="6.3" rx="0.9" ry="1.3" fill="#5f7420" opacity="0.89"/><ellipse cx="19.9" cy="15.3" rx="1.1" ry="0.8" fill="#5f7420" opacity="0.67"/><ellipse cx="22.5" cy="23.3" rx="0.5" ry="1.0" fill="#35521e" opacity="0.62"/><ellipse cx="23.5" cy="16.9" rx="1.2" ry="1.6" fill="#8a8a30" opacity="0.61"/><ellipse cx="7.6" cy="27.5" rx="1.5" ry="0.8" fill="#6a2a8a" opacity="0.86"/><ellipse cx="36.0" cy="18.4" rx="1.4" ry="1.3" fill="#8a8a30" opacity="0.69"/><ellipse cx="34.1" cy="12.4" rx="1.5" ry="1.5" fill="#3a6a30" opacity="0.81"/><ellipse cx="41.2" cy="14.7" rx="0.7" ry="0.8" fill="#a85a20" opacity="0.70"/><ellipse cx="24.3" cy="22.1" rx="0.8" ry="1.0" fill="#203060" opacity="0.85"/><ellipse cx="23.8" cy="25.4" rx="0.5" ry="1.1" fill="#203060" opacity="0.73"/><ellipse cx="20.1" cy="22.7" rx="1.3" ry="0.7" fill="#1a2412" opacity="0.78"/><ellipse cx="31.8" cy="14.9" rx="0.9" ry="1.2" fill="#24381a" opacity="0.66"/><ellipse cx="11.3" cy="9.6" rx="0.7" ry="0.7" fill="#4a2a6a" opacity="0.76"/><ellipse cx="11.8" cy="28.0" rx="0.8" ry="1.6" fill="#24381a" opacity="0.95"/><ellipse cx="17.6" cy="28.8" rx="1.6" ry="0.6" fill="#24381a" opacity="0.87"/><ellipse cx="29.2" cy="3.1" rx="1.0" ry="0.7" fill="#b8368a" opacity="0.63"/><ellipse cx="39.0" cy="12.8" rx="1.0" ry="0.5" fill="#3a6a30" opacity="0.64"/><ellipse cx="11.8" cy="21.6" rx="0.8" ry="0.5" fill="#203060" opacity="0.55"/><ellipse cx="26.2" cy="21.9" rx="1.5" ry="1.0" fill="#6a2a8a" opacity="0.72"/><ellipse cx="40.1" cy="18.8" rx="1.2" ry="1.2" fill="#6a2a8a" opacity="0.78"/><ellipse cx="20.7" cy="9.2" rx="1.2" ry="1.2" fill="#6a2a8a" opacity="0.80"/><ellipse cx="18.3" cy="20.9" rx="1.5" ry="0.8" fill="#5f7420" opacity="0.61"/><ellipse cx="39.2" cy="15.2" rx="1.0" ry="0.5" fill="#3a6a30" opacity="0.81"/><ellipse cx="0.5" cy="24.4" rx="1.5" ry="0.9" fill="#24381a" opacity="0.91"/><ellipse cx="7.4" cy="22.9" rx="0.5" ry="1.1" fill="#5f7420" opacity="0.93"/><ellipse cx="20.9" cy="6.0" rx="0.9" ry="1.4" fill="#1a2412" opacity="0.74"/><ellipse cx="23.8" cy="12.0" rx="1.2" ry="1.4" fill="#35521e" opacity="0.93"/><ellipse cx="23.5" cy="27.3" rx="1.6" ry="0.7" fill="#6a2a8a" opacity="0.84"/><ellipse cx="12.5" cy="11.7" rx="0.9" ry="0.6" fill="#4a2a6a" opacity="0.56"/><ellipse cx="30.8" cy="17.0" rx="1.5" ry="1.2" fill="#3a6a30" opacity="0.59"/><ellipse cx="24.1" cy="6.4" rx="1.3" ry="1.5" fill="#b8368a" opacity="0.87"/><ellipse cx="42.5" cy="2.0" rx="1.0" ry="0.7" fill="#3a6a30" opacity="0.87"/><ellipse cx="10.3" cy="28.2" rx="1.0" ry="1.1" fill="#6a2a8a" opacity="0.69"/><ellipse cx="18.9" cy="29.2" rx="1.4" ry="1.4" fill="#203060" opacity="0.85"/><ellipse cx="16.2" cy="24.9" rx="0.6" ry="1.4" fill="#203060" opacity="0.66"/><ellipse cx="31.0" cy="14.1" rx="1.3" ry="1.6" fill="#3a6a30" opacity="0.87"/><ellipse cx="14.6" cy="14.2" rx="0.9" ry="1.2" fill="#b8368a" opacity="0.80"/><ellipse cx="42.4" cy="25.0" rx="1.2" ry="0.9" fill="#5f7420" opacity="0.57"/><ellipse cx="6.4" cy="24.4" rx="1.5" ry="1.4" fill="#4a2a6a" opacity="0.80"/><ellipse cx="3.3" cy="8.6" rx="1.2" ry="0.7" fill="#35521e" opacity="0.79"/><ellipse cx="35.5" cy="10.2" rx="0.7" ry="0.8" fill="#4a2a6a" opacity="0.61"/><ellipse cx="40.7" cy="17.8" rx="1.4" ry="0.7" fill="#3a6a30" opacity="0.86"/><ellipse cx="29.1" cy="8.7" rx="1.5" ry="1.1" fill="#203060" opacity="0.75"/><ellipse cx="20.0" cy="25.9" rx="1.1" ry="1.3" fill="#6a2a8a" opacity="0.77"/><ellipse cx="21.6" cy="16.3" rx="1.0" ry="1.4" fill="#b8368a" opacity="0.74"/><ellipse cx="7.5" cy="17.6" rx="1.3" ry="0.8" fill="#24381a" opacity="0.84"/><ellipse cx="25.7" cy="19.5" rx="1.4" ry="1.0" fill="#24381a" opacity="0.89"/><ellipse cx="30.9" cy="5.3" rx="1.0" ry="1.6" fill="#a85a20" opacity="0.69"/><ellipse cx="31.2" cy="27.3" rx="0.5" ry="1.2" fill="#203060" opacity="0.68"/><ellipse cx="41.0" cy="1.0" rx="1.1" ry="1.0" fill="#5f7420" opacity="0.84"/><ellipse cx="30.1" cy="10.0" rx="0.6" ry="0.6" fill="#203060" opacity="0.86"/><ellipse cx="19.9" cy="12.4" rx="1.3" ry="0.7" fill="#1a2412" opacity="0.77"/><ellipse cx="18.5" cy="14.8" rx="0.8" ry="1.4" fill="#b8368a" opacity="0.66"/><ellipse cx="22.5" cy="3.5" rx="0.9" ry="0.7" fill="#1a2412" opacity="0.63"/><ellipse cx="4.0" cy="29.2" rx="0.6" ry="1.6" fill="#b8368a" opacity="0.71"/><ellipse cx="2.3" cy="8.8" rx="1.5" ry="1.1" fill="#1a2412" opacity="0.55"/><ellipse cx="35.0" cy="1.8" rx="1.4" ry="1.0" fill="#6a2a8a" opacity="0.75"/><ellipse cx="28.6" cy="20.4" rx="1.2" ry="1.2" fill="#1a2412" opacity="0.79"/><ellipse cx="29.0" cy="18.3" rx="0.6" ry="0.5" fill="#203060" opacity="0.62"/><ellipse cx="35.4" cy="26.8" rx="0.7" ry="0.5" fill="#203060" opacity="0.81"/><ellipse cx="14.1" cy="20.8" rx="1.5" ry="0.7" fill="#a85a20" opacity="0.89"/><ellipse cx="19.7" cy="18.8" rx="1.0" ry="0.9" fill="#24381a" opacity="0.92"/><ellipse cx="37.7" cy="22.7" rx="1.0" ry="1.1" fill="#35521e" opacity="0.72"/><ellipse cx="17.7" cy="17.3" rx="1.0" ry="0.5" fill="#3a6a30" opacity="0.93"/><ellipse cx="4.7" cy="18.9" rx="1.0" ry="1.0" fill="#24381a" opacity="0.63"/><ellipse cx="0.4" cy="19.6" rx="1.2" ry="1.0" fill="#24381a" opacity="0.94"/><ellipse cx="21.6" cy="8.1" rx="0.7" ry="0.6" fill="#5f7420" opacity="0.78"/><ellipse cx="2.3" cy="22.7" rx="1.3" ry="0.7" fill="#8a8a30" opacity="0.84"/><ellipse cx="28.7" cy="20.8" rx="1.3" ry="0.6" fill="#24381a" opacity="0.73"/><ellipse cx="1.5" cy="1.8" rx="1.5" ry="0.6" fill="#b8368a" opacity="0.90"/><ellipse cx="14.2" cy="21.4" rx="1.4" ry="0.6" fill="#203060" opacity="0.62"/><ellipse cx="43.4" cy="21.3" rx="1.2" ry="0.8" fill="#8a8a30" opacity="0.74"/><ellipse cx="16.6" cy="18.9" rx="0.7" ry="1.4" fill="#24381a" opacity="0.80"/><ellipse cx="20.7" cy="8.0" rx="1.0" ry="1.4" fill="#3a6a30" opacity="0.85"/><ellipse cx="44.5" cy="20.6" rx="0.8" ry="0.6" fill="#a85a20" opacity="0.88"/><ellipse cx="0.7" cy="4.4" rx="1.5" ry="1.3" fill="#a85a20" opacity="0.88"/><ellipse cx="17.2" cy="20.1" rx="1.0" ry="1.5" fill="#4a2a6a" opacity="0.79"/><ellipse cx="0.1" cy="7.7" rx="1.4" ry="0.8" fill="#6a2a8a" opacity="0.72"/><ellipse cx="35.8" cy="8.5" rx="1.5" ry="1.3" fill="#4a2a6a" opacity="0.61"/><ellipse cx="36.4" cy="16.1" rx="0.7" ry="1.6" fill="#4a2a6a" opacity="0.86"/><ellipse cx="25.3" cy="23.4" rx="0.9" ry="0.6" fill="#8a8a30" opacity="0.63"/><ellipse cx="18.1" cy="20.8" rx="0.8" ry="0.6" fill="#6a2a8a" opacity="0.92"/><ellipse cx="21.0" cy="2.6" rx="1.3" ry="1.4" fill="#4a2a6a" opacity="0.87"/><ellipse cx="41.0" cy="25.9" rx="0.8" ry="1.1" fill="#5f7420" opacity="0.76"/><ellipse cx="9.7" cy="2.7" rx="1.1" ry="0.7" fill="#8a8a30" opacity="0.87"/><ellipse cx="18.4" cy="15.2" rx="0.9" ry="1.1" fill="#b8368a" opacity="0.61"/><ellipse cx="39.6" cy="10.9" rx="1.5" ry="1.0" fill="#35521e" opacity="0.74"/><ellipse cx="15.8" cy="15.2" rx="0.7" ry="1.2" fill="#5f7420" opacity="0.56"/><ellipse cx="25.8" cy="17.2" rx="0.7" ry="1.5" fill="#35521e" opacity="0.64"/><ellipse cx="35.1" cy="24.0" rx="1.0" ry="1.5" fill="#b8368a" opacity="0.94"/><ellipse cx="45.5" cy="11.1" rx="1.4" ry="0.9" fill="#b8368a" opacity="0.56"/><ellipse cx="20.9" cy="27.8" rx="1.1" ry="1.5" fill="#35521e" opacity="0.91"/><ellipse cx="42.1" cy="20.7" rx="1.4" ry="1.2" fill="#5f7420" opacity="0.59"/><ellipse cx="43.7" cy="19.6" rx="1.1" ry="1.2" fill="#a85a20" opacity="0.71"/><ellipse cx="10.7" cy="21.1" rx="1.4" ry="0.9" fill="#8a8a30" opacity="0.62"/><ellipse cx="25.3" cy="0.8" rx="1.5" ry="0.6" fill="#b8368a" opacity="0.92"/><ellipse cx="29.6" cy="28.9" rx="1.4" ry="1.3" fill="#b8368a" opacity="0.57"/><ellipse cx="9.1" cy="21.9" rx="0.8" ry="0.5" fill="#24381a" opacity="0.79"/><ellipse cx="14.8" cy="7.5" rx="1.3" ry="0.6" fill="#8a8a30" opacity="0.60"/><ellipse cx="36.9" cy="26.8" rx="0.9" ry="1.0" fill="#8a8a30" opacity="0.91"/><ellipse cx="1.6" cy="27.2" rx="1.3" ry="0.7" fill="#8a8a30" opacity="0.64"/><ellipse cx="6.4" cy="13.1" rx="1.5" ry="1.5" fill="#4a2a6a" opacity="0.59"/><ellipse cx="20.7" cy="10.0" rx="1.4" ry="1.2" fill="#3a6a30" opacity="0.88"/><ellipse cx="15.2" cy="21.6" rx="0.6" ry="0.9" fill="#8a8a30" opacity="0.62"/><ellipse cx="39.8" cy="7.8" rx="1.1" ry="0.7" fill="#8a8a30" opacity="0.71"/><ellipse cx="13.6" cy="23.6" rx="0.5" ry="1.1" fill="#24381a" opacity="0.65"/><ellipse cx="5.2" cy="28.7" rx="0.8" ry="1.5" fill="#5f7420" opacity="0.57"/><ellipse cx="38.2" cy="3.5" rx="1.5" ry="1.1" fill="#203060" opacity="0.85"/><ellipse cx="10.9" cy="7.0" rx="1.0" ry="0.8" fill="#a85a20" opacity="0.71"/><ellipse cx="33.2" cy="8.6" rx="1.5" ry="0.6" fill="#3a6a30" opacity="0.94"/><ellipse cx="23.3" cy="13.0" rx="1.0" ry="1.1" fill="#35521e" opacity="0.87"/><ellipse cx="1.9" cy="12.0" rx="0.8" ry="0.9" fill="#1a2412" opacity="0.66"/><ellipse cx="35.2" cy="20.9" rx="0.7" ry="0.7" fill="#24381a" opacity="0.63"/><ellipse cx="33.4" cy="22.3" rx="1.4" ry="1.5" fill="#5f7420" opacity="0.62"/><ellipse cx="37.1" cy="17.1" rx="1.2" ry="1.3" fill="#24381a" opacity="0.63"/><ellipse cx="38.4" cy="26.8" rx="1.3" ry="1.1" fill="#5f7420" opacity="0.76"/><ellipse cx="39.5" cy="14.4" rx="0.9" ry="1.4" fill="#a85a20" opacity="0.56"/><ellipse cx="11.3" cy="16.5" rx="0.6" ry="1.2" fill="#8a8a30" opacity="0.94"/><ellipse cx="27.2" cy="0.1" rx="1.2" ry="1.6" fill="#0b0b07" opacity="0.73"/><ellipse cx="16.3" cy="7.2" rx="2.5" ry="1.1" fill="#0b0b07" opacity="0.87"/><ellipse cx="26.3" cy="26.3" rx="2.2" ry="2.3" fill="#0b0b07" opacity="0.63"/><ellipse cx="23.5" cy="15.5" rx="2.4" ry="1.7" fill="#0b0b07" opacity="0.74"/><ellipse cx="28.3" cy="4.9" rx="1.4" ry="1.1" fill="#0b0b07" opacity="0.64"/><ellipse cx="33.8" cy="7.7" rx="1.0" ry="2.4" fill="#0b0b07" opacity="0.88"/><ellipse cx="4.7" cy="25.5" rx="1.8" ry="2.1" fill="#0b0b07" opacity="0.82"/><ellipse cx="26.8" cy="22.3" rx="1.4" ry="1.7" fill="#0b0b07" opacity="0.55"/><ellipse cx="27.0" cy="25.2" rx="1.6" ry="1.2" fill="#0b0b07" opacity="0.57"/><ellipse cx="37.7" cy="27.5" rx="2.1" ry="1.2" fill="#0b0b07" opacity="0.67"/><ellipse cx="1.7" cy="28.4" rx="1.9" ry="1.9" fill="#0b0b07" opacity="0.52"/><ellipse cx="15.3" cy="12.8" rx="1.5" ry="1.4" fill="#0b0b07" opacity="0.94"/><ellipse cx="2.4" cy="15.2" rx="2.2" ry="2.3" fill="#0b0b07" opacity="0.93"/><ellipse cx="28.9" cy="10.7" rx="1.4" ry="1.6" fill="#0b0b07" opacity="0.74"/><ellipse cx="30.6" cy="6.6" rx="1.5" ry="1.3" fill="#0b0b07" opacity="0.69"/><ellipse cx="28.9" cy="23.7" rx="2.2" ry="2.4" fill="#0b0b07" opacity="0.90"/><ellipse cx="12.1" cy="19.9" rx="1.1" ry="2.0" fill="#0b0b07" opacity="0.62"/><ellipse cx="23.8" cy="12.7" rx="1.9" ry="1.4" fill="#0b0b07" opacity="0.93"/><ellipse cx="7.6" cy="1.8" rx="1.2" ry="1.5" fill="#0b0b07" opacity="0.93"/><ellipse cx="42.6" cy="12.9" rx="1.1" ry="1.9" fill="#0b0b07" opacity="0.73"/><ellipse cx="12.5" cy="21.6" rx="2.4" ry="1.9" fill="#0b0b07" opacity="0.83"/><ellipse cx="26.1" cy="19.1" rx="2.3" ry="1.9" fill="#0b0b07" opacity="0.59"/><ellipse cx="28.0" cy="13.7" rx="1.7" ry="1.8" fill="#0b0b07" opacity="0.64"/><ellipse cx="24.9" cy="28.4" rx="1.5" ry="1.3" fill="#0b0b07" opacity="0.68"/><ellipse cx="14.8" cy="9.5" rx="1.2" ry="2.4" fill="#0b0b07" opacity="0.62"/><ellipse cx="23.8" cy="15" rx="5.6" ry="9.5" fill="#a02ea6" /><ellipse cx="24.4" cy="3.4" rx="3" ry="2.6" fill="#c9c08e" /><ellipse cx="24.2" cy="6.6" rx="2.2" ry="1.8" fill="#7a5ab0" /><ellipse cx="23.8" cy="10.8" rx="4.4" ry="2.2" fill="#e6479a" /><ellipse cx="18.2" cy="9" rx="2.4" ry="2.8" fill="#7a3ad0" /><ellipse cx="30.4" cy="8.6" rx="2.4" ry="2.8" fill="#7a3ad0" /><ellipse cx="23.8" cy="16.5" rx="3.2" ry="2.6" fill="#d83a6e" /><ellipse cx="23.8" cy="23.6" rx="4" ry="4" fill="#e050a0" /><ellipse cx="20.5" cy="19.5" rx="1.3" ry="1.6" fill="#3fa060" /><ellipse cx="27.5" cy="19" rx="1.3" ry="1.6" fill="#40a0c0" /><ellipse cx="31.5" cy="14" rx="1.6" ry="2" fill="#3a70c0" /><ellipse cx="23.8" cy="27.6" rx="2.6" ry="1.4" fill="#c84a30" /></g></g></g></g><g transform="translate(185.15,0)"><g><clipPath id="c5"><rect x="0" y="0" width="45.4" height="29.3"/></clipPath><g clip-path="url(#c5)"><rect x="0" y="0" width="45.4" height="29.3" fill="#8e8a7e" /><g filter="url(#b1)"><rect x="0" y="0" width="45.4" height="7" fill="#6a727b" /><ellipse cx="14" cy="1" rx="16" ry="1.8" fill="#4f565f" /><ellipse cx="22" cy="4.5" rx="24" ry="1.8" fill="#c4c9cc" /><ellipse cx="38" cy="3" rx="8" ry="1.6" fill="#d6d6cc" /><rect x="0" y="6.3" width="45.4" height="6" fill="#9caab8" /><path d="M4 11 L9 8 L15 7 L22 8.200 L28 7.400 L33 10.500 L33 11.500 L4 11.500 Z" fill="#5878a2"/><rect x="6" y="10.8" width="24" height="2" fill="#aab4c0" opacity="0.8"/><ellipse cx="9.8" cy="11.4" rx="1.4" ry="2.1" fill="#a86a28" opacity="0.96"/><ellipse cx="26.0" cy="13.3" rx="1.9" ry="1.7" fill="#b89030" opacity="0.93"/><ellipse cx="23.7" cy="12.0" rx="1.3" ry="2.3" fill="#9a4a28" opacity="0.80"/><ellipse cx="20.7" cy="12.8" rx="1.2" ry="1.3" fill="#6a7a28" opacity="0.95"/><ellipse cx="24.2" cy="14.1" rx="2.0" ry="2.0" fill="#8a8a30" opacity="0.94"/><ellipse cx="15.9" cy="11.7" rx="1.9" ry="2.0" fill="#55641f" opacity="0.82"/><ellipse cx="29.1" cy="14.7" rx="1.8" ry="1.7" fill="#9a4a28" opacity="0.83"/><ellipse cx="15.1" cy="13.9" rx="2.2" ry="1.9" fill="#6a7a28" opacity="0.84"/><ellipse cx="18.6" cy="14.9" rx="1.5" ry="1.5" fill="#55641f" opacity="0.89"/><ellipse cx="18.0" cy="13.9" rx="2.1" ry="2.2" fill="#8a8a30" opacity="0.76"/><ellipse cx="15.0" cy="12.5" rx="2.1" ry="1.6" fill="#6a7a28" opacity="0.95"/><ellipse cx="26.1" cy="17.2" rx="1.5" ry="2.2" fill="#6a7a28" opacity="0.76"/><ellipse cx="6.6" cy="12.7" rx="2.2" ry="2.3" fill="#b89030" opacity="0.97"/><ellipse cx="18.9" cy="17.5" rx="2.3" ry="2.1" fill="#6a7a28" opacity="0.86"/><ellipse cx="17.1" cy="11.3" rx="2.0" ry="1.6" fill="#9a4a28" opacity="0.90"/><ellipse cx="18.6" cy="11.6" rx="2.3" ry="1.9" fill="#b89030" opacity="0.81"/><ellipse cx="9.7" cy="12.2" rx="1.9" ry="2.3" fill="#b89030" opacity="0.83"/><ellipse cx="29.9" cy="13.2" rx="1.6" ry="1.9" fill="#b89030" opacity="0.86"/><ellipse cx="29.5" cy="16.4" rx="1.2" ry="1.4" fill="#8a8a30" opacity="0.85"/><ellipse cx="14.2" cy="17.1" rx="1.9" ry="1.4" fill="#8a8a30" opacity="0.85"/><ellipse cx="25.6" cy="12.4" rx="1.9" ry="1.7" fill="#b89030" opacity="0.97"/><ellipse cx="20.5" cy="13.3" rx="1.3" ry="1.9" fill="#b89030" opacity="1.00"/><ellipse cx="6.3" cy="11.0" rx="2.0" ry="2.0" fill="#55641f" opacity="0.91"/><ellipse cx="26.2" cy="14.8" rx="1.0" ry="1.4" fill="#9a4a28" opacity="0.90"/><ellipse cx="19.6" cy="16.7" rx="1.2" ry="2.1" fill="#a86a28" opacity="0.97"/><ellipse cx="15.9" cy="11.8" rx="2.4" ry="1.8" fill="#9a4a28" opacity="0.75"/><ellipse cx="5.7" cy="10.9" rx="1.4" ry="1.5" fill="#36461a" opacity="0.89"/><ellipse cx="0.1" cy="14.8" rx="2.7" ry="1.5" fill="#5a6a24" opacity="0.86"/><ellipse cx="1.6" cy="5.4" rx="2.0" ry="1.7" fill="#465a1e" opacity="0.98"/><ellipse cx="2.3" cy="4.8" rx="2.0" ry="2.1" fill="#36461a" opacity="0.98"/><ellipse cx="1.5" cy="4.6" rx="2.1" ry="2.4" fill="#36461a" opacity="0.99"/><ellipse cx="4.9" cy="8.3" rx="1.9" ry="2.8" fill="#465a1e" opacity="0.92"/><ellipse cx="4.1" cy="13.4" rx="3.0" ry="1.5" fill="#5a6a24" opacity="0.92"/><ellipse cx="2.9" cy="15.1" rx="1.9" ry="2.8" fill="#5a6a24" opacity="0.85"/><ellipse cx="0.0" cy="16.4" rx="1.7" ry="2.0" fill="#465a1e" opacity="0.88"/><ellipse cx="2.3" cy="9.6" rx="1.6" ry="2.3" fill="#2c3a14" opacity="0.81"/><ellipse cx="3.3" cy="9.4" rx="2.1" ry="2.9" fill="#36461a" opacity="0.89"/><ellipse cx="4.0" cy="8.8" rx="1.8" ry="1.5" fill="#2c3a14" opacity="0.83"/><ellipse cx="5.0" cy="5.8" rx="1.5" ry="1.8" fill="#465a1e" opacity="0.89"/><ellipse cx="4.3" cy="9.3" rx="1.7" ry="2.0" fill="#465a1e" opacity="0.99"/><ellipse cx="32.5" cy="12.0" rx="1.9" ry="2.2" fill="#4c5e1e" opacity="0.94"/><ellipse cx="45.8" cy="7.5" rx="2.4" ry="2.1" fill="#5e7024" opacity="0.88"/><ellipse cx="31.1" cy="7.2" rx="1.7" ry="2.8" fill="#748a2e" opacity="0.91"/><ellipse cx="29.5" cy="10.1" rx="2.6" ry="2.6" fill="#5e7024" opacity="0.83"/><ellipse cx="32.0" cy="11.9" rx="2.0" ry="1.5" fill="#3c4c18" opacity="0.86"/><ellipse cx="42.7" cy="10.6" rx="1.5" ry="2.9" fill="#3c4c18" opacity="0.84"/><ellipse cx="42.9" cy="5.6" rx="1.5" ry="1.9" fill="#5e7024" opacity="0.87"/><ellipse cx="43.6" cy="1.9" rx="2.6" ry="2.8" fill="#2e3c12" opacity="0.86"/><ellipse cx="40.7" cy="12.6" rx="2.0" ry="2.7" fill="#3c4c18" opacity="0.81"/><ellipse cx="35.0" cy="8.8" rx="1.8" ry="2.8" fill="#2e3c12" opacity="0.84"/><ellipse cx="32.7" cy="9.5" rx="1.8" ry="2.4" fill="#3c4c18" opacity="0.88"/><ellipse cx="34.2" cy="5.3" rx="1.7" ry="1.7" fill="#748a2e" opacity="0.81"/><ellipse cx="38.6" cy="3.2" rx="2.4" ry="2.9" fill="#5e7024" opacity="0.90"/><ellipse cx="40.6" cy="4.9" rx="1.8" ry="2.1" fill="#748a2e" opacity="0.80"/><ellipse cx="38.9" cy="9.7" rx="2.8" ry="2.8" fill="#5e7024" opacity="0.99"/><ellipse cx="42.2" cy="4.8" rx="1.5" ry="1.9" fill="#3c4c18" opacity="0.98"/><ellipse cx="41.7" cy="11.6" rx="2.5" ry="2.0" fill="#2e3c12" opacity="0.86"/><ellipse cx="36.5" cy="4.8" rx="2.0" ry="2.9" fill="#3c4c18" opacity="0.90"/><ellipse cx="32.5" cy="9.4" rx="2.2" ry="2.5" fill="#2e3c12" opacity="0.97"/><ellipse cx="45.2" cy="11.6" rx="2.2" ry="1.7" fill="#4c5e1e" opacity="0.91"/><ellipse cx="39.8" cy="7.6" rx="2.3" ry="3.0" fill="#4c5e1e" opacity="0.85"/><ellipse cx="30.6" cy="8.9" rx="1.7" ry="2.0" fill="#3c4c18" opacity="0.83"/><ellipse cx="33.1" cy="7.2" rx="2.5" ry="1.8" fill="#2e3c12" opacity="0.89"/><ellipse cx="41.0" cy="8.2" rx="2.5" ry="1.6" fill="#5e7024" opacity="0.85"/><ellipse cx="31.9" cy="9.3" rx="2.3" ry="2.6" fill="#3c4c18" opacity="0.92"/><ellipse cx="32.5" cy="9.7" rx="2.7" ry="2.0" fill="#2e3c12" opacity="0.80"/><rect x="0" y="21" width="45.4" height="8.3" fill="#8b887f" /><rect x="0" y="18.5" width="27" height="9" fill="#8f8676" /><rect x="0" y="17.3" width="28" height="1.7" fill="#c4bba8" /><rect x="8" y="19" width="1.1" height="6.5" fill="#b8af9c" /><rect x="10.5" y="19" width="1.1" height="6.5" fill="#b8af9c" /><rect x="13" y="19" width="1.1" height="6.5" fill="#b8af9c" /><rect x="15.5" y="19" width="1.1" height="6.5" fill="#b8af9c" /><rect x="18" y="19" width="1.1" height="6.5" fill="#b8af9c" /><rect x="23.5" y="19" width="1.1" height="6.5" fill="#b8af9c" /><rect x="0" y="25.5" width="27" height="1.5" fill="#b5ac9a" /><rect x="2.8" y="14.6" width="3.4" height="12.6" fill="#b9b09e" /><rect x="2.4" y="14" width="4.2" height="1.4" fill="#cbc3b2" /><rect x="19.8" y="18.4" width="2.2" height="9" fill="#e2ded6" /><rect x="0" y="27" width="45.4" height="2.3" fill="#6d6a63" /><ellipse cx="29.4" cy="20" rx="2.2" ry="7.5" fill="#c45836" /><ellipse cx="29.4" cy="15.5" rx="1.8" ry="2.6" fill="#d8a040" /><ellipse cx="33.3" cy="20" rx="2.2" ry="7.5" fill="#c4445a" /><ellipse cx="33.3" cy="17" rx="1.6" ry="2" fill="#e0b040" /><ellipse cx="37.3" cy="20.5" rx="2.2" ry="7.5" fill="#2a8fa8" /><ellipse cx="38.5" cy="15.5" rx="1.2" ry="2" fill="#c03050" /><ellipse cx="29.6" cy="11.8" rx="1.3" ry="1.5" fill="#1c1414" /><ellipse cx="33.3" cy="11.6" rx="1.3" ry="1.5" fill="#1c1414" /><ellipse cx="36.8" cy="11.8" rx="1.3" ry="1.5" fill="#1c1414" /><rect x="40" y="17" width="5.4" height="8" fill="#9a9284" opacity="0.9"/></g></g></g></g><g transform="translate(230.5,0)"><g><clipPath id="c6"><rect x="0" y="0" width="45.4" height="29.3"/></clipPath><g clip-path="url(#c6)"><rect x="0" y="0" width="45.4" height="29.3" fill="#8c8c8a" /><g filter="url(#b1)"><rect x="0" y="0" width="45.4" height="10" fill="#cdd4db" /><ellipse cx="20" cy="3" rx="12" ry="2" fill="#dde2e6" /><path d="M0 9 L0 6 L4 4.600 L9 7 L11 9 Z" fill="#3d4d52"/><rect x="0" y="8.5" width="45.4" height="6.5" fill="#3c3c42" /><rect x="0" y="9.5" width="11" height="4.5" fill="#5a524c" /><path d="M33 7 L36 1.500 L45.400 0.800 L45.400 7 Z" fill="#26262c"/><rect x="35" y="7" width="10.4" height="7" fill="#5f4a3c" /><rect x="12" y="9.5" width="8" height="4" fill="#4a4a52" /><rect x="24" y="8.5" width="9" height="2.5" fill="#2e2e34" /><rect x="23.7" y="0" width="0.8" height="9" fill="#4a4a4e" /><ellipse cx="20.3" cy="6.2" rx="1.6" ry="1.4" fill="#f0f0f0" /><rect x="0" y="14.8" width="45.4" height="14.5" fill="#8a8a88" /><ellipse cx="12.8" cy="17.8" rx="0.8" ry="0.7" fill="#a2a2a0" opacity="0.78"/><ellipse cx="20.2" cy="23.0" rx="1.6" ry="0.8" fill="#a2a2a0" opacity="0.62"/><ellipse cx="44.5" cy="21.8" rx="0.6" ry="1.1" fill="#7c7c7a" opacity="0.80"/><ellipse cx="4.9" cy="21.8" rx="1.6" ry="1.2" fill="#868684" opacity="0.67"/><ellipse cx="16.3" cy="16.3" rx="1.4" ry="0.9" fill="#989896" opacity="0.61"/><ellipse cx="33.9" cy="15.4" rx="1.3" ry="0.7" fill="#868684" opacity="0.66"/><ellipse cx="29.0" cy="26.8" rx="0.9" ry="0.8" fill="#989896" opacity="0.87"/><ellipse cx="14.1" cy="23.6" rx="0.7" ry="1.3" fill="#989896" opacity="0.65"/><ellipse cx="25.0" cy="20.2" rx="0.9" ry="1.0" fill="#868684" opacity="0.83"/><ellipse cx="36.4" cy="27.9" rx="0.7" ry="0.7" fill="#989896" opacity="0.90"/><ellipse cx="22.4" cy="22.0" rx="1.5" ry="1.5" fill="#a2a2a0" opacity="0.56"/><ellipse cx="6.4" cy="18.2" rx="1.2" ry="1.2" fill="#868684" opacity="0.56"/><ellipse cx="20.0" cy="17.7" rx="0.7" ry="0.6" fill="#a2a2a0" opacity="0.79"/><ellipse cx="37.8" cy="22.2" rx="0.6" ry="1.2" fill="#7c7c7a" opacity="0.56"/><ellipse cx="19.1" cy="19.7" rx="1.3" ry="1.1" fill="#7c7c7a" opacity="0.68"/><ellipse cx="13.4" cy="21.2" rx="1.5" ry="0.8" fill="#989896" opacity="0.73"/><ellipse cx="24.6" cy="22.2" rx="1.2" ry="1.1" fill="#868684" opacity="0.67"/><ellipse cx="28.1" cy="26.4" rx="1.6" ry="1.6" fill="#989896" opacity="0.52"/><ellipse cx="25.9" cy="28.3" rx="1.2" ry="0.9" fill="#868684" opacity="0.69"/><ellipse cx="40.2" cy="15.4" rx="0.9" ry="0.9" fill="#989896" opacity="0.58"/><ellipse cx="26.3" cy="22.8" rx="1.3" ry="0.7" fill="#a2a2a0" opacity="0.88"/><ellipse cx="18.0" cy="16.6" rx="1.1" ry="1.2" fill="#868684" opacity="0.57"/><ellipse cx="39.1" cy="18.5" rx="1.1" ry="0.7" fill="#989896" opacity="0.54"/><ellipse cx="20.8" cy="22.6" rx="1.3" ry="0.8" fill="#868684" opacity="0.78"/><ellipse cx="36.3" cy="16.9" rx="1.5" ry="1.3" fill="#7c7c7a" opacity="0.70"/><ellipse cx="23.4" cy="21.4" rx="1.2" ry="1.6" fill="#7c7c7a" opacity="0.77"/><ellipse cx="21.6" cy="16.3" rx="1.6" ry="0.8" fill="#989896" opacity="0.65"/><ellipse cx="1.9" cy="24.8" rx="1.0" ry="0.6" fill="#7c7c7a" opacity="0.88"/><ellipse cx="19.3" cy="27.4" rx="0.9" ry="1.3" fill="#a2a2a0" opacity="0.75"/><ellipse cx="39.5" cy="17.4" rx="1.2" ry="1.5" fill="#989896" opacity="0.80"/><ellipse cx="0.5" cy="18.6" rx="1.4" ry="1.3" fill="#868684" opacity="0.60"/><ellipse cx="27.4" cy="16.4" rx="1.3" ry="0.6" fill="#868684" opacity="0.72"/><ellipse cx="11.0" cy="20.0" rx="0.6" ry="1.5" fill="#7c7c7a" opacity="0.78"/><ellipse cx="5.2" cy="15.3" rx="1.4" ry="1.2" fill="#7c7c7a" opacity="0.54"/><ellipse cx="13.2" cy="24.6" rx="0.8" ry="1.2" fill="#868684" opacity="0.65"/><ellipse cx="45.3" cy="25.7" rx="1.2" ry="0.9" fill="#989896" opacity="0.61"/><ellipse cx="6.9" cy="22.0" rx="0.6" ry="0.9" fill="#a2a2a0" opacity="0.85"/><ellipse cx="29.3" cy="23.4" rx="0.7" ry="1.2" fill="#7c7c7a" opacity="0.84"/><ellipse cx="10.4" cy="28.4" rx="1.3" ry="1.0" fill="#989896" opacity="0.71"/><ellipse cx="40.6" cy="23.2" rx="0.9" ry="0.8" fill="#868684" opacity="0.52"/><ellipse cx="6.5" cy="17.0" rx="1.798" ry="3.3480000000000003" fill="#8e2c3c" /><ellipse cx="6.5" cy="18" rx="1.922" ry="0.744" fill="#3a2c48" /><ellipse cx="6.5" cy="20" rx="1.8599999999999999" ry="0.62" fill="#c04858" /><ellipse cx="6.5" cy="13" rx="1.302" ry="1.612" fill="#2f60b4" /><ellipse cx="6.5" cy="15" rx="1.488" ry="0.558" fill="#3a9a4a" /><ellipse cx="6.5" cy="10.8" rx="0.682" ry="0.744" fill="#2a2020" /><ellipse cx="11.6" cy="17.0" rx="1.972" ry="3.6720000000000006" fill="#8e2c3c" /><ellipse cx="11.6" cy="18" rx="2.108" ry="0.8160000000000001" fill="#3a2c48" /><ellipse cx="11.6" cy="20" rx="2.04" ry="0.68" fill="#c04858" /><ellipse cx="11.6" cy="13" rx="1.4280000000000002" ry="1.7680000000000002" fill="#2f60b4" /><ellipse cx="11.6" cy="15" rx="1.6320000000000001" ry="0.6120000000000001" fill="#3a9a4a" /><ellipse cx="11.6" cy="10.8" rx="0.7480000000000001" ry="0.8160000000000001" fill="#2a2020" /><ellipse cx="21" cy="19.5" rx="2.9" ry="5.4" fill="#8e2c3c" /><ellipse cx="21" cy="21.5" rx="3.1" ry="1.2" fill="#3a2c48" /><ellipse cx="21" cy="24" rx="3" ry="1" fill="#c04858" /><ellipse cx="21" cy="13.2" rx="2.1" ry="2.6" fill="#2f60b4" /><ellipse cx="21" cy="16" rx="2.4" ry="0.9" fill="#3a9a4a" /><ellipse cx="21" cy="10" rx="1.1" ry="1.2" fill="#2a2020" /><ellipse cx="32.6" cy="19.5" rx="2.9" ry="5.4" fill="#8e2c3c" /><ellipse cx="32.6" cy="21.5" rx="3.1" ry="1.2" fill="#3a2c48" /><ellipse cx="32.6" cy="24" rx="3" ry="1" fill="#c04858" /><ellipse cx="32.6" cy="13.2" rx="2.1" ry="2.6" fill="#2f60b4" /><ellipse cx="32.6" cy="16" rx="2.4" ry="0.9" fill="#3a9a4a" /><ellipse cx="32.6" cy="10" rx="1.1" ry="1.2" fill="#2a2020" /><ellipse cx="38.6" cy="17.0" rx="2.465" ry="4.59" fill="#8e2c3c" /><ellipse cx="38.6" cy="18" rx="2.635" ry="1.02" fill="#3a2c48" /><ellipse cx="38.6" cy="20" rx="2.55" ry="0.85" fill="#c04858" /><ellipse cx="38.6" cy="13" rx="1.785" ry="2.21" fill="#2f60b4" /><ellipse cx="38.6" cy="15" rx="2.04" ry="0.765" fill="#3a9a4a" /><ellipse cx="38.6" cy="10.8" rx="0.935" ry="1.02" fill="#2a2020" /><ellipse cx="43.6" cy="17.0" rx="2.32" ry="4.32" fill="#8e2c3c" /><ellipse cx="43.6" cy="18" rx="2.4800000000000004" ry="0.96" fill="#3a2c48" /><ellipse cx="43.6" cy="20" rx="2.4000000000000004" ry="0.8" fill="#c04858" /><ellipse cx="43.6" cy="13" rx="1.6800000000000002" ry="2.08" fill="#2f60b4" /><ellipse cx="43.6" cy="15" rx="1.92" ry="0.7200000000000001" fill="#3a9a4a" /><ellipse cx="43.6" cy="10.8" rx="0.8800000000000001" ry="0.96" fill="#2a2020" /><ellipse cx="27" cy="16" rx="1.6" ry="3" fill="#5a3a48" /><ellipse cx="16" cy="15.5" rx="1.2" ry="2.4" fill="#4a3a58" /></g></g></g></g><g transform="translate(275.9,0)"><g><clipPath id="c7"><rect x="0" y="0" width="39.1" height="29.3"/></clipPath><g clip-path="url(#c7)"><rect x="0" y="0" width="39.1" height="29.3" fill="#c39b4c" /><g filter="url(#b1)"><rect x="0" y="0" width="39.1" height="8" fill="#e9e5d9" /><path d="M0 11.500 L0 9 L6 7.200 L12 8.200 L18 6.800 L24 8.400 L31 7.400 L39.100 9 L39.100 11.500 Z" fill="#a9a1a0"/><rect x="0" y="11" width="39.1" height="3" fill="#d0b070" opacity="0.9"/><ellipse cx="13.0" cy="18.6" rx="1.9" ry="1.8" fill="#b88c3c" opacity="0.87"/><ellipse cx="13.1" cy="12.3" rx="0.8" ry="1.6" fill="#caa048" opacity="0.68"/><ellipse cx="26.2" cy="15.8" rx="0.9" ry="1.0" fill="#dcb45c" opacity="0.61"/><ellipse cx="22.4" cy="20.2" rx="2.2" ry="1.3" fill="#dcb45c" opacity="0.56"/><ellipse cx="3.7" cy="14.8" rx="2.1" ry="2.1" fill="#d2a850" opacity="0.67"/><ellipse cx="11.0" cy="23.1" rx="1.7" ry="1.3" fill="#dcb45c" opacity="0.85"/><ellipse cx="29.8" cy="22.4" rx="1.8" ry="1.2" fill="#b88c3c" opacity="0.70"/><ellipse cx="15.9" cy="12.8" rx="1.3" ry="1.6" fill="#b88c3c" opacity="0.63"/><ellipse cx="19.7" cy="24.5" rx="2.0" ry="1.9" fill="#caa048" opacity="0.82"/><ellipse cx="34.8" cy="21.4" rx="1.0" ry="1.1" fill="#caa048" opacity="0.66"/><ellipse cx="6.6" cy="12.9" rx="1.6" ry="1.2" fill="#a87c30" opacity="0.62"/><ellipse cx="25.8" cy="25.5" rx="1.2" ry="1.6" fill="#caa048" opacity="0.53"/><ellipse cx="7.0" cy="20.1" rx="1.6" ry="0.9" fill="#b88c3c" opacity="0.89"/><ellipse cx="28.2" cy="24.9" rx="2.2" ry="1.8" fill="#caa048" opacity="0.84"/><ellipse cx="10.1" cy="12.3" rx="2.1" ry="1.2" fill="#caa048" opacity="0.57"/><ellipse cx="1.9" cy="18.3" rx="1.1" ry="0.8" fill="#caa048" opacity="0.86"/><ellipse cx="7.7" cy="22.3" rx="2.0" ry="1.7" fill="#caa048" opacity="0.89"/><ellipse cx="31.9" cy="20.1" rx="0.9" ry="0.9" fill="#dcb45c" opacity="0.79"/><ellipse cx="34.2" cy="21.0" rx="1.1" ry="1.6" fill="#d2a850" opacity="0.87"/><ellipse cx="1.1" cy="18.8" rx="1.3" ry="2.0" fill="#b88c3c" opacity="0.74"/><ellipse cx="31.1" cy="13.2" rx="1.0" ry="2.0" fill="#caa048" opacity="0.75"/><ellipse cx="36.8" cy="24.2" rx="2.2" ry="1.4" fill="#a87c30" opacity="0.51"/><ellipse cx="2.2" cy="20.6" rx="1.6" ry="2.2" fill="#caa048" opacity="0.79"/><ellipse cx="8.2" cy="19.4" rx="1.0" ry="0.8" fill="#caa048" opacity="0.84"/><ellipse cx="21.1" cy="20.2" rx="1.9" ry="1.4" fill="#caa048" opacity="0.72"/><ellipse cx="24.2" cy="23.4" rx="1.6" ry="1.1" fill="#dcb45c" opacity="0.69"/><ellipse cx="30.2" cy="25.7" rx="1.9" ry="1.2" fill="#d2a850" opacity="0.68"/><ellipse cx="10.7" cy="15.5" rx="1.3" ry="1.5" fill="#caa048" opacity="0.72"/><ellipse cx="14.2" cy="25.9" rx="1.7" ry="1.9" fill="#d2a850" opacity="0.59"/><ellipse cx="4.8" cy="19.6" rx="2.1" ry="1.7" fill="#d2a850" opacity="0.58"/><ellipse cx="28.8" cy="24.6" rx="1.2" ry="1.6" fill="#b88c3c" opacity="0.85"/><ellipse cx="27.7" cy="18.2" rx="1.5" ry="1.3" fill="#b88c3c" opacity="0.84"/><ellipse cx="31.3" cy="18.4" rx="1.7" ry="1.3" fill="#b88c3c" opacity="0.63"/><ellipse cx="2.6" cy="21.0" rx="1.0" ry="1.8" fill="#d2a850" opacity="0.66"/><ellipse cx="16.0" cy="24.9" rx="0.9" ry="1.6" fill="#caa048" opacity="0.88"/><ellipse cx="27.7" cy="15.4" rx="0.8" ry="0.8" fill="#b88c3c" opacity="0.64"/><ellipse cx="11.7" cy="25.9" rx="1.9" ry="1.7" fill="#caa048" opacity="0.59"/><ellipse cx="36.5" cy="22.8" rx="1.9" ry="1.5" fill="#dcb45c" opacity="0.88"/><ellipse cx="13.0" cy="18.8" rx="2.0" ry="1.2" fill="#b88c3c" opacity="0.86"/><ellipse cx="37.4" cy="15.0" rx="1.2" ry="1.7" fill="#b88c3c" opacity="0.52"/><rect x="0" y="25" width="39.1" height="4.3" fill="#8e6a24" /><ellipse cx="9.3" cy="26.2" rx="2.2" ry="2.0" fill="#2a2010" opacity="0.73"/><ellipse cx="16.3" cy="23.6" rx="2.2" ry="2.4" fill="#3a2c14" opacity="0.63"/><ellipse cx="22.1" cy="24.7" rx="1.2" ry="1.4" fill="#2a2010" opacity="0.83"/><ellipse cx="17.5" cy="26.7" rx="2.0" ry="1.1" fill="#3a2c14" opacity="0.81"/><ellipse cx="14.6" cy="26.3" rx="2.4" ry="1.0" fill="#3a2c14" opacity="0.81"/><ellipse cx="24.1" cy="25.9" rx="1.2" ry="1.8" fill="#2a2010" opacity="0.82"/><ellipse cx="32.6" cy="23.9" rx="2.4" ry="1.4" fill="#2a2010" opacity="0.75"/><ellipse cx="14.3" cy="25.4" rx="1.7" ry="1.0" fill="#2a2010" opacity="0.79"/><ellipse cx="34.8" cy="23.8" rx="1.7" ry="2.2" fill="#2a2010" opacity="0.89"/><ellipse cx="13.0" cy="24.4" rx="2.0" ry="1.4" fill="#2a2010" opacity="0.62"/><ellipse cx="30.1" cy="26.8" rx="1.3" ry="1.1" fill="#2a2010" opacity="0.68"/><ellipse cx="23.2" cy="25.4" rx="2.0" ry="1.9" fill="#3a2c14" opacity="0.81"/><ellipse cx="19.7" cy="26.9" rx="1.6" ry="1.4" fill="#3a2c14" opacity="0.72"/><ellipse cx="33.1" cy="25.7" rx="2.2" ry="2.1" fill="#3a2c14" opacity="0.67"/><path d="M9 22 C9 17 13 13.500 20 12.600 C22 12.500 22.500 14 21 15.500 C19 18 16 21 13 23.500 C11 24.500 9 24 9 22 Z" fill="#2a1f15"/><ellipse cx="20.6" cy="13.6" rx="1.6" ry="1.4" fill="#3a2a1c" /><ellipse cx="13" cy="25" rx="1.6" ry="1.8" fill="#1c140c" /><ellipse cx="28.4" cy="16.5" rx="5.8" ry="8" fill="#80602f" /><ellipse cx="26" cy="14" rx="3" ry="4" fill="#a8844a" /><ellipse cx="31.5" cy="19" rx="2.6" ry="5" fill="#5a4220" /><ellipse cx="25" cy="22.5" rx="4" ry="2.4" fill="#caa060" /><ellipse cx="30.6" cy="7.9" rx="1.9" ry="2" fill="#b98a66" /><ellipse cx="31.4" cy="5" rx="2.7" ry="2.3" fill="#c7482c" /><ellipse cx="32.6" cy="6.4" rx="2.6" ry="1.6" fill="#d9a43e" /><ellipse cx="29.6" cy="4.2" rx="1.2" ry="1.4" fill="#d9a43e" /><ellipse cx="33" cy="24.5" rx="3" ry="2" fill="#2a1e10" /></g></g></g></g><use href="#ph1" x="315.1" y="0"/><use href="#ph2" x="362.0" y="0"/><g transform="translate(409.4,0)"><rect x="0" y="0" width="6.2" height="29.3" fill="#2d2f33"/><line x1="0.4" y1="5" x2="5.800" y2="12" stroke="#c8703a" stroke-width="1.300"/><rect x="0" y="22" width="2" height="7.300" fill="#b07a5a"/></g></svg>
      <div class="abs" style="left:523px;top:0;width:165px;height:30.5px;background:#8f1e1c;"></div>
      <div class="t" style="left:535px;top:6.2px;font-size:8.25px;line-height:9.8px;font-weight:bold;color:#fff;-webkit-text-stroke:0.1px #fff;white-space:nowrap;">Photograph your local culture, help<br>Wikipedia and win!</div>
      <svg class="abs" style="left:675.9px;top:2.8px" width="9.6" height="9.6" viewBox="0 0 10 10"><circle cx="5" cy="5" r="4.1" fill="#5e1514" stroke="#f0e6e6" stroke-width="0.9"/><path d="M3.2 3.2 L6.8 6.8 M6.8 3.2 L3.2 6.8" stroke="#f0e6e6" stroke-width="0.95"/></svg>
    </div>
    <!-- title -->
    <div class="t" style="left:177.2px;top:95px;font-family:'Liberation Serif',serif;font-size:16.2px;color:#000;line-height:18px;-webkit-text-stroke:0.3px #000;">Atom</div>
    <div class="abs" style="left:177px;top:112.4px;width:495px;height:0.6px;background:#9fa7b0;"></div>
    <svg class="abs" style="left:598.5px;top:99px" width="10" height="9" viewBox="0 0 10 9"><g fill="none" stroke="#3366cc" stroke-width="0.8"><path d="M0.5 1.5 H5.5 M3 0.4 V1.5 M4.6 1.5 C4 3.5 2.6 5 0.7 5.8 M1.5 1.5 C2 3.3 3.2 4.6 4.8 5.3"/><path d="M4.8 8.6 L7 3.2 L9.3 8.6 M5.6 6.9 H8.5"/></g></svg>
    <div class="t l" style="left:612.6px;top:101.5px;font-size:7.05px;font-weight:bold;">200 languages</div>
    <svg class="abs" style="left:666px;top:102px" width="6" height="4" viewBox="0 0 6 4"><path d="M0.7 0.7 L3 3 L5.3 0.7" fill="none" stroke="#3366cc" stroke-width="0.8"/></svg>
    <!-- tabs -->
    <div class="t" style="left:177px;top:123.4px;font-size:6.75px;">Article</div>
    <div class="abs" style="left:177px;top:133.6px;width:18.5px;height:0.8px;background:#3a3c3e;"></div>
    <div class="t l" style="left:204px;top:123.4px;font-size:6.75px;">Talk</div>
    <div class="abs" style="left:177px;top:134.1px;width:495px;height:0.5px;background:#c8ccd1;"></div>
    <div class="t" style="left:567.2px;top:123.4px;font-size:6.75px;">Read</div>
    <div class="abs" style="left:567px;top:133.6px;width:16px;height:0.8px;background:#3a3c3e;"></div>
    <div class="t l" style="left:591.3px;top:123.4px;font-size:6.75px;">View source</div>
    <div class="t l" style="left:636px;top:123.4px;font-size:6.75px;">View history</div>
    <svg class="abs" style="left:662px;top:134.2px" width="9.5" height="10.6" viewBox="0 0 9 10"><rect x="1" y="4.2" width="7" height="5.3" rx="0.8" fill="#54595d"/><path d="M2.6 4.2 V3 A1.9 1.9 0 0 1 6.4 3 V4.2" fill="none" stroke="#54595d" stroke-width="1"/><circle cx="4.5" cy="6.3" r="0.8" fill="#fff"/><rect x="4.1" y="6.5" width="0.8" height="1.8" fill="#fff"/></svg>
    <div class="t" style="left:177px;top:140.7px;font-size:6.7px;">From Wikipedia, the free encyclopedia</div>
    <div class="t" style="left:189px;top:158.1px;font-size:7.22px;font-style:italic;">For other uses, see <span class="l">Atom (disambiguation)</span>.</div>
    <!-- sidebar -->
    <div class="abs" style="left:10px;top:305px;width:124px;height:17px;background:linear-gradient(#fcfcfc,#fefefe);"></div>
    <div class="t" style="left:27px;top:122.7px;font-size:7.2px;color:#54595d;">Contents <span style="font-size:6px;-webkit-text-stroke:0;position:relative;top:0.5px;">[<span class="l">hide</span>]</span></div>
    <div class="side" style="top:140.3px;color:#202122;font-weight:bold;">(Top)</div>
    <div class="side" style="top:154.45px;">History of atomic theory</div>
    <div class="side" style="top:168.67px;">Structure</div>
    <div class="side" style="top:182.89px;">Properties</div>
    <div class="side" style="top:197.11px;">Identification</div>
    <div class="side" style="top:211.33px;">Origin and current state</div>
    <div class="side" style="top:225.55px;">See also</div>
    <div class="side" style="top:239.77px;">Notes</div>
    <div class="side" style="top:253.99px;">References</div>
    <div class="side" style="top:268.21px;">Bibliography</div>
    <div class="side" style="top:282.43px;">Further reading</div>
    <div class="side" style="top:296.65px;">External links</div>
    <svg class="chev" style="top:155.55px" viewBox="0 0 4 6"><path d="M0.8 0.6 L3.2 3 L0.8 5.4" fill="none" stroke="#202122" stroke-width="1"/></svg>
    <svg class="chev" style="top:169.77px" viewBox="0 0 4 6"><path d="M0.8 0.6 L3.2 3 L0.8 5.4" fill="none" stroke="#202122" stroke-width="1"/></svg>
    <svg class="chev" style="top:183.99px" viewBox="0 0 4 6"><path d="M0.8 0.6 L3.2 3 L0.8 5.4" fill="none" stroke="#202122" stroke-width="1"/></svg>
    <svg class="chev" style="top:212.43px" viewBox="0 0 4 6"><path d="M0.8 0.6 L3.2 3 L0.8 5.4" fill="none" stroke="#202122" stroke-width="1"/></svg>
    <!-- highlight -->
    <div class="abs hl" style="left:176.5px;top:173.3px;width:326.2px;height:91.6px;"></div>
    <div class="abs hl" style="left:176.5px;top:264.5px;width:228.2px;height:11.2px;"></div>
    <!-- paragraphs -->
    <div class="p" style="top:172.1px;">An <b>atom</b> is a particle that consists of a <a>nucleus</a> of <a>protons</a> and <a>neutrons</a> surrounded by a cloud of<br><a>electrons</a>. The atom is the basic particle of the <a>chemical elements</a>, and the chemical elements are<br>distinguished from each other by the number of protons that are in their atoms. For example, any<br>atom that contains 11 protons is <a>sodium</a>, and any atom that contains 29 protons is <a>copper</a>. The<br>number of <a>neutrons</a> defines the <a>isotope</a> of the element.</div>
    <div class="p" style="top:232.1px;">Atoms are extremely small, typically around 100 <a>picometers</a> across. A human hair is about a million<br>carbon atoms wide. This is smaller than the shortest wavelength of visible light, which means humans<br>cannot see atoms with conventional microscopes. Atoms are so small that accurately predicting their<br>behavior using <a>classical physics</a> is not possible due to <a>quantum effects</a>.</div>
    <div class="p" style="top:281.2px;">More than 99.94% of an atom's <a>mass</a> is in the nucleus. The protons have a positive <a>electric charge</a>,<br>the electrons have a negative electric charge, and the neutrons have no electric charge. If the number<br>of <a>protons</a> and electrons are equal, then the atom is electrically neutral. If an atom has more or fewer<br>electrons than protons, then it has an overall negative or positive charge, respectively – such atoms<br>are called <a>ions</a>.</div>
    <div class="p" style="top:341.5px;">The electrons of an atom are attracted to the protons in an atomic nucleus by the <a>electromagnetic</a><br><a>force</a>. The protons and neutrons in the nucleus are attracted to each other by the <a>nuclear force</a>. This<br>force is usually stronger than the electromagnetic force that repels the positively charged protons from<br>one another. Under certain circumstances, the repelling electromagnetic force becomes stronger than<br>the nuclear force. In this case, the nucleus <a>splits</a> and <a>leaves behind different elements</a>. This is a form<br>of <a>nuclear decay</a>.</div>
    <div class="p" style="top:412.9px;">Atoms can attach to one or more other atoms by <a>chemical bonds</a> to form <a>chemical compounds</a> such</div>
    <!-- infobox -->
    <div id="ib" class="abs" style="left:509.4px;top:174.7px;width:163px;height:260px;background:#f8f9fa;border:1px solid #c3c7cf;box-sizing:border-box;"></div>
    <div class="abs" style="left:513.5px;top:178.3px;width:155.5px;height:9.8px;background:#b9b9d8;"></div>
    <div class="t" style="left:513.5px;width:155.5px;text-align:center;top:179.5px;font-size:7.7px;font-weight:bold;color:#000;-webkit-text-stroke:0.2px #000;">Atom</div>
    <svg class="abs" style="left:513px;top:189px" width="156" height="157" viewBox="0 0 156 157">
      <defs>
        <radialGradient id="cl"><stop offset="0" stop-color="#0a0405"/><stop offset="0.1" stop-color="#150c0d"/><stop offset="0.25" stop-color="#383233"/><stop offset="0.5" stop-color="#716e6e"/><stop offset="0.75" stop-color="#adacac"/><stop offset="0.92" stop-color="#d8d8d8"/><stop offset="0.97" stop-color="#e7e7e8"/><stop offset="1" stop-color="#f8f9fa"/></radialGradient>
        <radialGradient id="rd"><stop offset="0" stop-color="#ee3a34"/><stop offset="0.4" stop-color="#d02c28"/><stop offset="0.7" stop-color="#a82421" stop-opacity="0.75"/><stop offset="1" stop-color="#7a1c1c" stop-opacity="0"/></radialGradient>
        <radialGradient id="bl"><stop offset="0" stop-color="#7448e6"/><stop offset="0.4" stop-color="#5d38cc"/><stop offset="0.7" stop-color="#4a2ea8" stop-opacity="0.75"/><stop offset="1" stop-color="#3a2480" stop-opacity="0"/></radialGradient>
      </defs>
      <circle cx="70" cy="85.5" r="52" fill="url(#cl)"/>
      <g stroke="#3a3a3a" stroke-width="0.5"><line x1="70" y1="85.5" x2="107.5" y2="2"/><line x1="70" y1="85.5" x2="107.5" y2="50"/><line x1="70" y1="85.5" x2="154.5" y2="50"/></g>
      <circle cx="70" cy="85.5" r="0.9" fill="#d44fd0"/>
      <rect x="107.5" y="1.5" width="47.5" height="48.5" fill="#2b1c20" stroke="#8e1f1f" stroke-width="0.8"/>
      <circle cx="131.3" cy="17.3" r="8.6" fill="url(#rd)"/>
      <circle cx="131.3" cy="33.2" r="8.6" fill="url(#rd)"/>
      <circle cx="122.8" cy="25" r="7.3" fill="url(#bl)"/>
      <circle cx="139.8" cy="25" r="7.3" fill="url(#bl)"/>
      <text x="109" y="46.2" font-family="Liberation Sans" font-size="4.6" font-weight="bold" fill="#fff" style="-webkit-text-stroke:0">1 fm</text>
      <rect x="108.6" y="47.4" width="30.5" height="0.8" fill="#fff"/>
      <text x="1" y="147" font-family="Liberation Sans" font-size="9.3" fill="#333" style="-webkit-text-stroke:0">1 Å = 100 pm</text>
    </svg>
    <div class="abs" style="left:514.5px;top:339px;width:84px;height:6px;background:#1c1a1c;"></div>
    <div class="cap" style="top:346.6px;">An illustration of the <a>helium</a> atom, depicting the <a>nucleus</a><br>(pink) and the <a>electron cloud</a> distribution (black). The<br>nucleus (upper right) in helium-4 is in reality spherically<br>symmetric and closely resembles the electron cloud,<br>although for more complicated nuclei this is not always<br>the case. The black bar is one <a>angstrom</a> (10<sup style="font-size:4.9px;line-height:0;vertical-align:2.4px;">−10</sup> m or<br>100 <a>pm</a>).</div>
    <div class="abs" style="left:513.5px;top:413.3px;width:155.5px;height:12px;background:#b9b9d8;"></div>
    <div class="t" style="left:513.5px;width:155.5px;text-align:center;top:415px;font-size:6.2px;font-weight:bold;color:#000;">Classification</div>
    <!-- fullscreen button -->
    <div class="abs" style="left:721px;top:403.5px;width:16.5px;height:16.5px;background:#f8f9fa;border:0.6px solid #c8ccd1;border-radius:1.5px;box-sizing:border-box;"></div>
    <svg class="abs" style="left:725.5px;top:408.2px" width="7.6" height="7.6" viewBox="0 0 8 8"><path d="M0.6 2.6 V0.6 H2.6 M5.4 0.6 H7.4 V2.6 M7.4 5.4 V7.4 H5.4 M2.6 7.4 H0.6 V5.4" fill="none" stroke="#202122" stroke-width="1.15"/></svg>
  </div>
</div>
</body>
</html>
